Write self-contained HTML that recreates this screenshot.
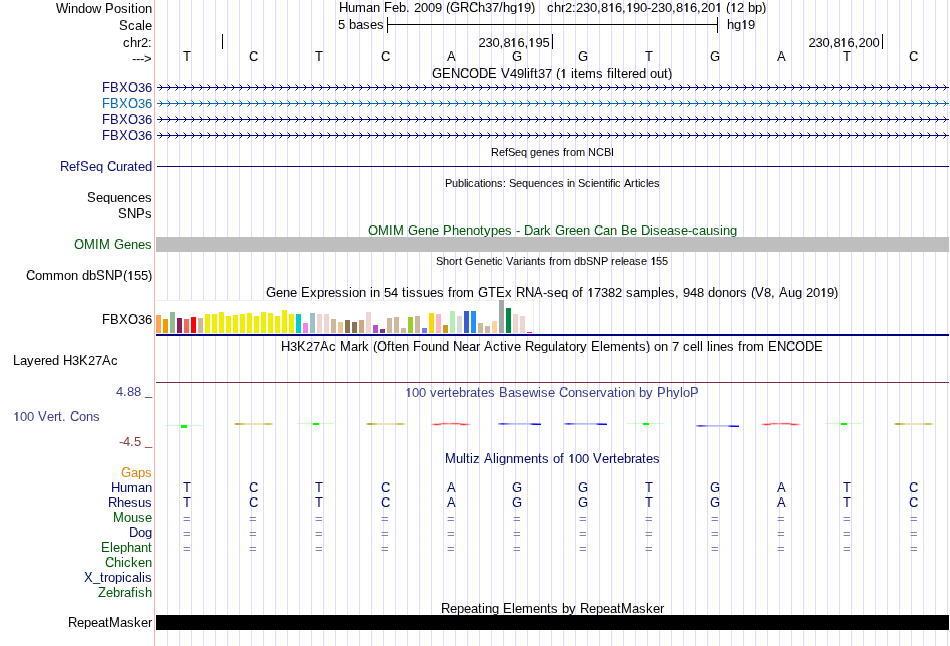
<!DOCTYPE html>
<html><head><meta charset="utf-8"><style>
html,body{margin:0;padding:0;background:#fff;width:950px;height:646px;overflow:hidden}
svg{display:block;will-change:transform}
text{font-family:"Liberation Sans", sans-serif}
</style></head><body>
<svg width="950" height="646" viewBox="0 0 950 646">
<defs><clipPath id="cb13" clipPathUnits="userSpaceOnUse"><rect x="0" y="5" width="950" height="9"/></clipPath><clipPath id="ct13" clipPathUnits="userSpaceOnUse"><rect x="0" y="-7" width="950" height="12"/><rect x="0" y="14" width="950" height="10"/></clipPath><clipPath id="cb30" clipPathUnits="userSpaceOnUse"><rect x="0" y="22" width="950" height="9"/></clipPath><clipPath id="ct30" clipPathUnits="userSpaceOnUse"><rect x="0" y="10" width="950" height="12"/><rect x="0" y="31" width="950" height="10"/></clipPath><clipPath id="cb47" clipPathUnits="userSpaceOnUse"><rect x="0" y="39" width="950" height="9"/></clipPath><clipPath id="ct47" clipPathUnits="userSpaceOnUse"><rect x="0" y="27" width="950" height="12"/><rect x="0" y="48" width="950" height="10"/></clipPath><clipPath id="cb63" clipPathUnits="userSpaceOnUse"><rect x="0" y="55" width="950" height="9"/></clipPath><clipPath id="ct63" clipPathUnits="userSpaceOnUse"><rect x="0" y="43" width="950" height="12"/><rect x="0" y="64" width="950" height="10"/></clipPath><clipPath id="cb92" clipPathUnits="userSpaceOnUse"><rect x="0" y="84" width="950" height="9"/></clipPath><clipPath id="ct92" clipPathUnits="userSpaceOnUse"><rect x="0" y="72" width="950" height="12"/><rect x="0" y="93" width="950" height="10"/></clipPath><clipPath id="cb108" clipPathUnits="userSpaceOnUse"><rect x="0" y="100" width="950" height="9"/></clipPath><clipPath id="ct108" clipPathUnits="userSpaceOnUse"><rect x="0" y="88" width="950" height="12"/><rect x="0" y="109" width="950" height="10"/></clipPath><clipPath id="cb124" clipPathUnits="userSpaceOnUse"><rect x="0" y="116" width="950" height="9"/></clipPath><clipPath id="ct124" clipPathUnits="userSpaceOnUse"><rect x="0" y="104" width="950" height="12"/><rect x="0" y="125" width="950" height="10"/></clipPath><clipPath id="cb140" clipPathUnits="userSpaceOnUse"><rect x="0" y="132" width="950" height="9"/></clipPath><clipPath id="ct140" clipPathUnits="userSpaceOnUse"><rect x="0" y="120" width="950" height="12"/><rect x="0" y="141" width="950" height="10"/></clipPath><clipPath id="cb171" clipPathUnits="userSpaceOnUse"><rect x="0" y="163" width="950" height="9"/></clipPath><clipPath id="ct171" clipPathUnits="userSpaceOnUse"><rect x="0" y="151" width="950" height="12"/><rect x="0" y="172" width="950" height="10"/></clipPath><clipPath id="cb202" clipPathUnits="userSpaceOnUse"><rect x="0" y="194" width="950" height="9"/></clipPath><clipPath id="ct202" clipPathUnits="userSpaceOnUse"><rect x="0" y="182" width="950" height="12"/><rect x="0" y="203" width="950" height="10"/></clipPath><clipPath id="cb218" clipPathUnits="userSpaceOnUse"><rect x="0" y="210" width="950" height="9"/></clipPath><clipPath id="ct218" clipPathUnits="userSpaceOnUse"><rect x="0" y="198" width="950" height="12"/><rect x="0" y="219" width="950" height="10"/></clipPath><clipPath id="cb249" clipPathUnits="userSpaceOnUse"><rect x="0" y="241" width="950" height="9"/></clipPath><clipPath id="ct249" clipPathUnits="userSpaceOnUse"><rect x="0" y="229" width="950" height="12"/><rect x="0" y="250" width="950" height="10"/></clipPath><clipPath id="cb280" clipPathUnits="userSpaceOnUse"><rect x="0" y="272" width="950" height="9"/></clipPath><clipPath id="ct280" clipPathUnits="userSpaceOnUse"><rect x="0" y="260" width="950" height="12"/><rect x="0" y="281" width="950" height="10"/></clipPath><clipPath id="cb324" clipPathUnits="userSpaceOnUse"><rect x="0" y="316" width="950" height="9"/></clipPath><clipPath id="ct324" clipPathUnits="userSpaceOnUse"><rect x="0" y="304" width="950" height="12"/><rect x="0" y="325" width="950" height="10"/></clipPath><clipPath id="cb365" clipPathUnits="userSpaceOnUse"><rect x="0" y="357" width="950" height="9"/></clipPath><clipPath id="ct365" clipPathUnits="userSpaceOnUse"><rect x="0" y="345" width="950" height="12"/><rect x="0" y="366" width="950" height="10"/></clipPath><clipPath id="cb396" clipPathUnits="userSpaceOnUse"><rect x="0" y="388" width="950" height="9"/></clipPath><clipPath id="ct396" clipPathUnits="userSpaceOnUse"><rect x="0" y="376" width="950" height="12"/><rect x="0" y="397" width="950" height="10"/></clipPath><clipPath id="cb421" clipPathUnits="userSpaceOnUse"><rect x="0" y="413" width="950" height="9"/></clipPath><clipPath id="ct421" clipPathUnits="userSpaceOnUse"><rect x="0" y="401" width="950" height="12"/><rect x="0" y="422" width="950" height="10"/></clipPath><clipPath id="cb446" clipPathUnits="userSpaceOnUse"><rect x="0" y="438" width="950" height="9"/></clipPath><clipPath id="ct446" clipPathUnits="userSpaceOnUse"><rect x="0" y="426" width="950" height="12"/><rect x="0" y="447" width="950" height="10"/></clipPath><clipPath id="cb477" clipPathUnits="userSpaceOnUse"><rect x="0" y="469" width="950" height="9"/></clipPath><clipPath id="ct477" clipPathUnits="userSpaceOnUse"><rect x="0" y="457" width="950" height="12"/><rect x="0" y="478" width="950" height="10"/></clipPath><clipPath id="cb492" clipPathUnits="userSpaceOnUse"><rect x="0" y="484" width="950" height="9"/></clipPath><clipPath id="ct492" clipPathUnits="userSpaceOnUse"><rect x="0" y="472" width="950" height="12"/><rect x="0" y="493" width="950" height="10"/></clipPath><clipPath id="cb507" clipPathUnits="userSpaceOnUse"><rect x="0" y="499" width="950" height="9"/></clipPath><clipPath id="ct507" clipPathUnits="userSpaceOnUse"><rect x="0" y="487" width="950" height="12"/><rect x="0" y="508" width="950" height="10"/></clipPath><clipPath id="cb522" clipPathUnits="userSpaceOnUse"><rect x="0" y="514" width="950" height="9"/></clipPath><clipPath id="ct522" clipPathUnits="userSpaceOnUse"><rect x="0" y="502" width="950" height="12"/><rect x="0" y="523" width="950" height="10"/></clipPath><clipPath id="cb537" clipPathUnits="userSpaceOnUse"><rect x="0" y="529" width="950" height="9"/></clipPath><clipPath id="ct537" clipPathUnits="userSpaceOnUse"><rect x="0" y="517" width="950" height="12"/><rect x="0" y="538" width="950" height="10"/></clipPath><clipPath id="cb552" clipPathUnits="userSpaceOnUse"><rect x="0" y="544" width="950" height="9"/></clipPath><clipPath id="ct552" clipPathUnits="userSpaceOnUse"><rect x="0" y="532" width="950" height="12"/><rect x="0" y="553" width="950" height="10"/></clipPath><clipPath id="cb567" clipPathUnits="userSpaceOnUse"><rect x="0" y="559" width="950" height="9"/></clipPath><clipPath id="ct567" clipPathUnits="userSpaceOnUse"><rect x="0" y="547" width="950" height="12"/><rect x="0" y="568" width="950" height="10"/></clipPath><clipPath id="cb582" clipPathUnits="userSpaceOnUse"><rect x="0" y="574" width="950" height="9"/></clipPath><clipPath id="ct582" clipPathUnits="userSpaceOnUse"><rect x="0" y="562" width="950" height="12"/><rect x="0" y="583" width="950" height="10"/></clipPath><clipPath id="cb597" clipPathUnits="userSpaceOnUse"><rect x="0" y="589" width="950" height="9"/></clipPath><clipPath id="ct597" clipPathUnits="userSpaceOnUse"><rect x="0" y="577" width="950" height="12"/><rect x="0" y="598" width="950" height="10"/></clipPath><clipPath id="cb627" clipPathUnits="userSpaceOnUse"><rect x="0" y="619" width="950" height="9"/></clipPath><clipPath id="ct627" clipPathUnits="userSpaceOnUse"><rect x="0" y="607" width="950" height="12"/><rect x="0" y="628" width="950" height="10"/></clipPath><clipPath id="cb12" clipPathUnits="userSpaceOnUse"><rect x="0" y="4" width="950" height="9"/></clipPath><clipPath id="ct12" clipPathUnits="userSpaceOnUse"><rect x="0" y="-8" width="950" height="12"/><rect x="0" y="13" width="950" height="10"/></clipPath><clipPath id="cb29" clipPathUnits="userSpaceOnUse"><rect x="0" y="21" width="950" height="9"/></clipPath><clipPath id="ct29" clipPathUnits="userSpaceOnUse"><rect x="0" y="9" width="950" height="12"/><rect x="0" y="30" width="950" height="10"/></clipPath><clipPath id="cb61" clipPathUnits="userSpaceOnUse"><rect x="0" y="53" width="950" height="9"/></clipPath><clipPath id="ct61" clipPathUnits="userSpaceOnUse"><rect x="0" y="41" width="950" height="12"/><rect x="0" y="62" width="950" height="10"/></clipPath><clipPath id="cb78" clipPathUnits="userSpaceOnUse"><rect x="0" y="70" width="950" height="9"/></clipPath><clipPath id="ct78" clipPathUnits="userSpaceOnUse"><rect x="0" y="58" width="950" height="12"/><rect x="0" y="79" width="950" height="10"/></clipPath><clipPath id="cb235" clipPathUnits="userSpaceOnUse"><rect x="0" y="227" width="950" height="9"/></clipPath><clipPath id="ct235" clipPathUnits="userSpaceOnUse"><rect x="0" y="215" width="950" height="12"/><rect x="0" y="236" width="950" height="10"/></clipPath><clipPath id="cb297" clipPathUnits="userSpaceOnUse"><rect x="0" y="289" width="950" height="9"/></clipPath><clipPath id="ct297" clipPathUnits="userSpaceOnUse"><rect x="0" y="277" width="950" height="12"/><rect x="0" y="298" width="950" height="10"/></clipPath><clipPath id="cb351" clipPathUnits="userSpaceOnUse"><rect x="0" y="343" width="950" height="9"/></clipPath><clipPath id="ct351" clipPathUnits="userSpaceOnUse"><rect x="0" y="331" width="950" height="12"/><rect x="0" y="352" width="950" height="10"/></clipPath><clipPath id="cb397" clipPathUnits="userSpaceOnUse"><rect x="0" y="389" width="950" height="9"/></clipPath><clipPath id="ct397" clipPathUnits="userSpaceOnUse"><rect x="0" y="377" width="950" height="12"/><rect x="0" y="398" width="950" height="10"/></clipPath><linearGradient id="gC" x1="0" x2="1" y1="0" y2="0"><stop offset="0" stop-color="#b4ac32" stop-opacity="0.3"/><stop offset="0.08" stop-color="#aca52a" stop-opacity="1"/><stop offset="0.18" stop-color="#c8c364" stop-opacity="1"/><stop offset="0.3" stop-color="#e8e6be" stop-opacity="1"/><stop offset="0.7" stop-color="#e8e6be" stop-opacity="1"/><stop offset="0.8" stop-color="#cdc86e" stop-opacity="1"/><stop offset="0.9" stop-color="#c3be5a" stop-opacity="0.9"/><stop offset="1" stop-color="#c8c364" stop-opacity="0"/></linearGradient><linearGradient id="gG" x1="0" x2="1" y1="0" y2="0"><stop offset="0" stop-color="#3a3aff" stop-opacity="0.35"/><stop offset="0.1" stop-color="#2a2aff" stop-opacity="0.95"/><stop offset="0.2" stop-color="#7070ff" stop-opacity="0.9"/><stop offset="0.3" stop-color="#b8b8ff" stop-opacity="1"/><stop offset="0.72" stop-color="#bcbcff" stop-opacity="1"/><stop offset="0.8" stop-color="#9a9aff" stop-opacity="1"/><stop offset="0.86" stop-color="#8080ff" stop-opacity="0.6"/><stop offset="1" stop-color="#8080ff" stop-opacity="0"/></linearGradient><linearGradient id="gGt" x1="0" x2="1" y1="0" y2="0"><stop offset="0" stop-color="#0000ff" stop-opacity="0.1"/><stop offset="0.3" stop-color="#0000ff" stop-opacity="0.9"/><stop offset="0.95" stop-color="#0000ff" stop-opacity="1"/><stop offset="1" stop-color="#0000ff" stop-opacity="0.5"/></linearGradient><linearGradient id="gAL" x1="0" x2="1" y1="0" y2="0"><stop offset="0" stop-color="#ff2020" stop-opacity="0.1"/><stop offset="0.5" stop-color="#ff2020" stop-opacity="1"/><stop offset="1" stop-color="#ff4040" stop-opacity="0.7"/></linearGradient><linearGradient id="gAR" x1="0" x2="1" y1="0" y2="0"><stop offset="0" stop-color="#ff4040" stop-opacity="0.7"/><stop offset="0.35" stop-color="#ff2020" stop-opacity="1"/><stop offset="1" stop-color="#ff2020" stop-opacity="0.1"/></linearGradient><linearGradient id="gAM" x1="0" x2="1" y1="0" y2="0"><stop offset="0" stop-color="#ff6060" stop-opacity="0.35"/><stop offset="0.2" stop-color="#ff3c3c" stop-opacity="0.85"/><stop offset="0.45" stop-color="#ff7a7a" stop-opacity="0.75"/><stop offset="0.6" stop-color="#ff4444" stop-opacity="0.85"/><stop offset="0.85" stop-color="#ff4040" stop-opacity="0.85"/><stop offset="1" stop-color="#ff6060" stop-opacity="0.35"/></linearGradient><clipPath id="cb463" clipPathUnits="userSpaceOnUse"><rect x="0" y="455" width="950" height="9"/></clipPath><clipPath id="ct463" clipPathUnits="userSpaceOnUse"><rect x="0" y="443" width="950" height="12"/><rect x="0" y="464" width="950" height="10"/></clipPath><clipPath id="cb523" clipPathUnits="userSpaceOnUse"><rect x="0" y="515" width="950" height="9"/></clipPath><clipPath id="ct523" clipPathUnits="userSpaceOnUse"><rect x="0" y="503" width="950" height="12"/><rect x="0" y="524" width="950" height="10"/></clipPath><clipPath id="cb538" clipPathUnits="userSpaceOnUse"><rect x="0" y="530" width="950" height="9"/></clipPath><clipPath id="ct538" clipPathUnits="userSpaceOnUse"><rect x="0" y="518" width="950" height="12"/><rect x="0" y="539" width="950" height="10"/></clipPath><clipPath id="cb553" clipPathUnits="userSpaceOnUse"><rect x="0" y="545" width="950" height="9"/></clipPath><clipPath id="ct553" clipPathUnits="userSpaceOnUse"><rect x="0" y="533" width="950" height="12"/><rect x="0" y="554" width="950" height="10"/></clipPath><clipPath id="cb613" clipPathUnits="userSpaceOnUse"><rect x="0" y="605" width="950" height="9"/></clipPath><clipPath id="ct613" clipPathUnits="userSpaceOnUse"><rect x="0" y="593" width="950" height="12"/><rect x="0" y="614" width="950" height="10"/></clipPath></defs>
<rect width="950" height="646" fill="#fff"/>
<rect x="167" y="0" width="1" height="646" fill="#ddddff"/>
<rect x="179" y="0" width="1" height="646" fill="#ddddff"/>
<rect x="191" y="0" width="1" height="646" fill="#ddddff"/>
<rect x="203" y="0" width="1" height="646" fill="#ddddff"/>
<rect x="215" y="0" width="1" height="646" fill="#ddddff"/>
<rect x="227" y="0" width="1" height="646" fill="#ddddff"/>
<rect x="239" y="0" width="1" height="646" fill="#ddddff"/>
<rect x="251" y="0" width="1" height="646" fill="#ddddff"/>
<rect x="263" y="0" width="1" height="646" fill="#ddddff"/>
<rect x="275" y="0" width="1" height="646" fill="#ddddff"/>
<rect x="287" y="0" width="1" height="646" fill="#ddddff"/>
<rect x="299" y="0" width="1" height="646" fill="#ddddff"/>
<rect x="311" y="0" width="1" height="646" fill="#ddddff"/>
<rect x="323" y="0" width="1" height="646" fill="#ddddff"/>
<rect x="335" y="0" width="1" height="646" fill="#ddddff"/>
<rect x="347" y="0" width="1" height="646" fill="#ddddff"/>
<rect x="359" y="0" width="1" height="646" fill="#ddddff"/>
<rect x="371" y="0" width="1" height="646" fill="#ddddff"/>
<rect x="383" y="0" width="1" height="646" fill="#ddddff"/>
<rect x="395" y="0" width="1" height="646" fill="#ddddff"/>
<rect x="407" y="0" width="1" height="646" fill="#ddddff"/>
<rect x="419" y="0" width="1" height="646" fill="#ddddff"/>
<rect x="431" y="0" width="1" height="646" fill="#ddddff"/>
<rect x="443" y="0" width="1" height="646" fill="#ddddff"/>
<rect x="455" y="0" width="1" height="646" fill="#ddddff"/>
<rect x="467" y="0" width="1" height="646" fill="#ddddff"/>
<rect x="479" y="0" width="1" height="646" fill="#ddddff"/>
<rect x="491" y="0" width="1" height="646" fill="#ddddff"/>
<rect x="503" y="0" width="1" height="646" fill="#ddddff"/>
<rect x="515" y="0" width="1" height="646" fill="#ddddff"/>
<rect x="527" y="0" width="1" height="646" fill="#ddddff"/>
<rect x="539" y="0" width="1" height="646" fill="#ddddff"/>
<rect x="551" y="0" width="1" height="646" fill="#ddddff"/>
<rect x="563" y="0" width="1" height="646" fill="#ddddff"/>
<rect x="575" y="0" width="1" height="646" fill="#ddddff"/>
<rect x="587" y="0" width="1" height="646" fill="#ddddff"/>
<rect x="599" y="0" width="1" height="646" fill="#ddddff"/>
<rect x="611" y="0" width="1" height="646" fill="#ddddff"/>
<rect x="623" y="0" width="1" height="646" fill="#ddddff"/>
<rect x="635" y="0" width="1" height="646" fill="#ddddff"/>
<rect x="647" y="0" width="1" height="646" fill="#ddddff"/>
<rect x="659" y="0" width="1" height="646" fill="#ddddff"/>
<rect x="671" y="0" width="1" height="646" fill="#ddddff"/>
<rect x="683" y="0" width="1" height="646" fill="#ddddff"/>
<rect x="695" y="0" width="1" height="646" fill="#ddddff"/>
<rect x="707" y="0" width="1" height="646" fill="#ddddff"/>
<rect x="719" y="0" width="1" height="646" fill="#ddddff"/>
<rect x="731" y="0" width="1" height="646" fill="#ddddff"/>
<rect x="743" y="0" width="1" height="646" fill="#ddddff"/>
<rect x="755" y="0" width="1" height="646" fill="#ddddff"/>
<rect x="767" y="0" width="1" height="646" fill="#ddddff"/>
<rect x="779" y="0" width="1" height="646" fill="#ddddff"/>
<rect x="791" y="0" width="1" height="646" fill="#ddddff"/>
<rect x="803" y="0" width="1" height="646" fill="#ddddff"/>
<rect x="815" y="0" width="1" height="646" fill="#ddddff"/>
<rect x="827" y="0" width="1" height="646" fill="#ddddff"/>
<rect x="839" y="0" width="1" height="646" fill="#ddddff"/>
<rect x="851" y="0" width="1" height="646" fill="#ddddff"/>
<rect x="863" y="0" width="1" height="646" fill="#ddddff"/>
<rect x="875" y="0" width="1" height="646" fill="#ddddff"/>
<rect x="887" y="0" width="1" height="646" fill="#ddddff"/>
<rect x="899" y="0" width="1" height="646" fill="#ddddff"/>
<rect x="911" y="0" width="1" height="646" fill="#ddddff"/>
<rect x="923" y="0" width="1" height="646" fill="#ddddff"/>
<rect x="935" y="0" width="1" height="646" fill="#ddddff"/>
<rect x="947" y="0" width="1" height="646" fill="#ddddff"/>
<rect x="154" y="0" width="1" height="646" fill="#ffb0b0"/>
<text x="56 68 71 78 85 92 105 114 121 128 131 135 138 145" y="13" font-size="13.0" fill="#000" clip-path="url(#cb13)">WindowPosition</text>
<g clip-path="url(#ct13)">
<text x="56 68 71 78 85 92 105 114 121 128 131 135 138 145" y="12" font-size="13.0" fill="#000">WindowPosition</text>
</g>
<text x="119 128 135 142 145" y="30" font-size="13.0" fill="#000" clip-path="url(#cb30)">Scale</text>
<g clip-path="url(#ct30)">
<text x="119 128 135 142 145" y="29" font-size="13.0" fill="#000">Scale</text>
</g>
<text x="141" y="47" font-size="13.0" fill="#000">2</text>
<text x="123 130 137 148" y="47" font-size="13.0" fill="#000" clip-path="url(#cb47)">chr:</text>
<g clip-path="url(#ct47)">
<text x="123 130 137 148" y="46" font-size="13.0" fill="#000">chr:</text>
</g>
<text x="132 136 140 144" y="63" font-size="13.0" fill="#000" clip-path="url(#cb63)">---&gt;</text>
<g clip-path="url(#ct63)">
<text x="132 136 140 144" y="62" font-size="13.0" fill="#000">---&gt;</text>
</g>
<text x="138 145" y="92" font-size="13.0" fill="#0c0c78">36</text>
<text x="102 110 119 128" y="92" font-size="13.0" fill="#0c0c78" clip-path="url(#cb92)">FBXO</text>
<g clip-path="url(#ct92)">
<text x="102 110 119 128" y="91" font-size="13.0" fill="#0c0c78">FBXO</text>
</g>
<text x="138 145" y="108" font-size="13.0" fill="#0c66aa">36</text>
<text x="102 110 119 128" y="108" font-size="13.0" fill="#0c66aa" clip-path="url(#cb108)">FBXO</text>
<g clip-path="url(#ct108)">
<text x="102 110 119 128" y="107" font-size="13.0" fill="#0c66aa">FBXO</text>
</g>
<text x="138 145" y="124" font-size="13.0" fill="#0c0c78">36</text>
<text x="102 110 119 128" y="124" font-size="13.0" fill="#0c0c78" clip-path="url(#cb124)">FBXO</text>
<g clip-path="url(#ct124)">
<text x="102 110 119 128" y="123" font-size="13.0" fill="#0c0c78">FBXO</text>
</g>
<text x="138 145" y="140" font-size="13.0" fill="#0c0c78">36</text>
<text x="102 110 119 128" y="140" font-size="13.0" fill="#0c0c78" clip-path="url(#cb140)">FBXO</text>
<g clip-path="url(#ct140)">
<text x="102 110 119 128" y="139" font-size="13.0" fill="#0c0c78">FBXO</text>
</g>
<text x="60 69 76 80 89 96 107 116 123 127 134 138 145" y="171" font-size="13.0" fill="#0c0c78" clip-path="url(#cb171)">RefSeqCurated</text>
<g clip-path="url(#ct171)">
<text x="60 69 76 80 89 96 107 116 123 127 134 138 145" y="170" font-size="13.0" fill="#0c0c78">RefSeqCurated</text>
</g>
<text x="87 96 103 110 117 124 131 138 145" y="202" font-size="13.0" fill="#000" clip-path="url(#cb202)">Sequences</text>
<g clip-path="url(#ct202)">
<text x="87 96 103 110 117 124 131 138 145" y="201" font-size="13.0" fill="#000">Sequences</text>
</g>
<text x="118 127 136 145" y="218" font-size="13.0" fill="#000" clip-path="url(#cb218)">SNPs</text>
<g clip-path="url(#ct218)">
<text x="118 127 136 145" y="217" font-size="13.0" fill="#000">SNPs</text>
</g>
<text x="74 84 95 99 114 124 131 138 145" y="249" font-size="13.0" fill="#005a0a" clip-path="url(#cb249)">OMIMGenes</text>
<g clip-path="url(#ct249)">
<text x="74 84 95 99 114 124 131 138 145" y="248" font-size="13.0" fill="#005a0a">OMIMGenes</text>
</g>
<path d="M130,271h1v9h-1z" fill="#000" fill-opacity="0.85"/><path d="M131,271h1v9h-1z" fill="#000" fill-opacity="0.6"/><path d="M129,272h1v1h-1z" fill="#000" fill-opacity="0.85"/><path d="M129,273h1v1h-1z M128,273h1v1h-1z" fill="#000" fill-opacity="0.45"/>
<text x="134 141" y="280" font-size="13.0" fill="#000">55</text>
<text x="26 35 42 53 64 71 82 89 96 105 114 123 148" y="280" font-size="13.0" fill="#000" clip-path="url(#cb280)">CommondbSNP()</text>
<g clip-path="url(#ct280)">
<text x="26 35 42 53 64 71 82 89 96 105 114 123 148" y="279" font-size="13.0" fill="#000">CommondbSNP()</text>
</g>
<text x="138 145" y="324" font-size="13.0" fill="#000">36</text>
<text x="102 110 119 128" y="324" font-size="13.0" fill="#000" clip-path="url(#cb324)">FBXO</text>
<g clip-path="url(#ct324)">
<text x="102 110 119 128" y="323" font-size="13.0" fill="#000">FBXO</text>
</g>
<text x="72 88 95" y="365" font-size="13.0" fill="#000">327</text>
<text x="13 20 27 34 41 45 52 63 79 102 111" y="365" font-size="13.0" fill="#000" clip-path="url(#cb365)">LayeredHKAc</text>
<g clip-path="url(#ct365)">
<text x="13 20 27 34 41 45 52 63 79 102 111" y="364" font-size="13.0" fill="#000">LayeredHKAc</text>
</g>
<text x="116 127 134" y="396" font-size="13.0" fill="#3c3c8c">488</text>
<text x="123 145" y="396" font-size="13.0" fill="#3c3c8c" clip-path="url(#cb396)">._</text>
<g clip-path="url(#ct396)">
<text x="123 145" y="395" font-size="13.0" fill="#3c3c8c">._</text>
</g>
<path d="M16,412h1v9h-1z" fill="#3c3c8c" fill-opacity="0.85"/><path d="M17,412h1v9h-1z" fill="#3c3c8c" fill-opacity="0.6"/><path d="M15,413h1v1h-1z" fill="#3c3c8c" fill-opacity="0.85"/><path d="M15,414h1v1h-1z M14,414h1v1h-1z" fill="#3c3c8c" fill-opacity="0.45"/>
<text x="20 27" y="421" font-size="13.0" fill="#3c3c8c">00</text>
<text x="38 47 54 58 62 70 79 86 93" y="421" font-size="13.0" fill="#3c3c8c" clip-path="url(#cb421)">Vert.Cons</text>
<g clip-path="url(#ct421)">
<text x="38 47 54 58 62 70 79 86 93" y="420" font-size="13.0" fill="#3c3c8c">Vert.Cons</text>
</g>
<text x="123 134" y="446" font-size="13.0" fill="#8c3c3c">45</text>
<text x="119 130 145" y="446" font-size="13.0" fill="#8c3c3c" clip-path="url(#cb446)">-._</text>
<g clip-path="url(#ct446)">
<text x="119 130 145" y="445" font-size="13.0" fill="#8c3c3c">-._</text>
</g>
<text x="121 131 138 145" y="477" font-size="13.0" fill="#e6820a" clip-path="url(#cb477)">Gaps</text>
<g clip-path="url(#ct477)">
<text x="121 131 138 145" y="476" font-size="13.0" fill="#e6820a">Gaps</text>
</g>
<text x="111 120 127 138 145" y="492" font-size="13.0" fill="#000a64" clip-path="url(#cb492)">Human</text>
<g clip-path="url(#ct492)">
<text x="111 120 127 138 145" y="491" font-size="13.0" fill="#000a64">Human</text>
</g>
<text x="108 117 124 131 138 145" y="507" font-size="13.0" fill="#000a64" clip-path="url(#cb507)">Rhesus</text>
<g clip-path="url(#ct507)">
<text x="108 117 124 131 138 145" y="506" font-size="13.0" fill="#000a64">Rhesus</text>
</g>
<text x="113 124 131 138 145" y="522" font-size="13.0" fill="#005a0a" clip-path="url(#cb522)">Mouse</text>
<g clip-path="url(#ct522)">
<text x="113 124 131 138 145" y="521" font-size="13.0" fill="#005a0a">Mouse</text>
</g>
<text x="129 138 145" y="537" font-size="13.0" fill="#000a64" clip-path="url(#cb537)">Dog</text>
<g clip-path="url(#ct537)">
<text x="129 138 145" y="536" font-size="13.0" fill="#000a64">Dog</text>
</g>
<text x="101 110 113 120 127 134 141 148" y="552" font-size="13.0" fill="#005a0a" clip-path="url(#cb552)">Elephant</text>
<g clip-path="url(#ct552)">
<text x="101 110 113 120 127 134 141 148" y="551" font-size="13.0" fill="#005a0a">Elephant</text>
</g>
<text x="105 114 121 124 131 138 145" y="567" font-size="13.0" fill="#005a0a" clip-path="url(#cb567)">Chicken</text>
<g clip-path="url(#ct567)">
<text x="105 114 121 124 131 138 145" y="566" font-size="13.0" fill="#005a0a">Chicken</text>
</g>
<text x="84 93 100 104 108 115 122 125 132 139 142 145" y="582" font-size="13.0" fill="#000a64" clip-path="url(#cb582)">X_tropicalis</text>
<g clip-path="url(#ct582)">
<text x="84 93 100 104 108 115 122 125 132 139 142 145" y="581" font-size="13.0" fill="#000a64">X_tropicalis</text>
</g>
<text x="98 106 113 120 124 131 135 138 145" y="597" font-size="13.0" fill="#005a0a" clip-path="url(#cb597)">Zebrafish</text>
<g clip-path="url(#ct597)">
<text x="98 106 113 120 124 131 135 138 145" y="596" font-size="13.0" fill="#005a0a">Zebrafish</text>
</g>
<text x="68 77 84 91 98 105 109 120 127 134 141 148" y="627" font-size="13.0" fill="#000" clip-path="url(#cb627)">RepeatMasker</text>
<g clip-path="url(#ct627)">
<text x="68 77 84 91 98 105 109 120 127 134 141 148" y="626" font-size="13.0" fill="#000">RepeatMasker</text>
</g>
<path d="M520,3h1v9h-1z" fill="#000" fill-opacity="0.85"/><path d="M521,3h1v9h-1z" fill="#000" fill-opacity="0.6"/><path d="M519,4h1v1h-1z" fill="#000" fill-opacity="0.85"/><path d="M519,5h1v1h-1z M518,5h1v1h-1z" fill="#000" fill-opacity="0.45"/>
<text x="414 421 428 435 485 492 524" y="12" font-size="13.0" fill="#000">2009379</text>
<text x="339 348 355 366 373 384 392 399 406 446 450 460 469 478 499 503 510 531" y="12" font-size="13.0" fill="#000" clip-path="url(#cb12)">HumanFeb.(GRCh/hg)</text>
<g clip-path="url(#ct12)">
<text x="339 348 355 366 373 384 392 399 406 446 450 460 469 478 499 503 510 531" y="11" font-size="13.0" fill="#000">HumanFeb.(GRCh/hg)</text>
</g>
<path d="M611,3h1v9h-1z" fill="#000" fill-opacity="0.85"/><path d="M612,3h1v9h-1z" fill="#000" fill-opacity="0.6"/><path d="M610,4h1v1h-1z" fill="#000" fill-opacity="0.85"/><path d="M610,5h1v1h-1z M609,5h1v1h-1z" fill="#000" fill-opacity="0.45"/>
<path d="M629,3h1v9h-1z" fill="#000" fill-opacity="0.85"/><path d="M630,3h1v9h-1z" fill="#000" fill-opacity="0.6"/><path d="M628,4h1v1h-1z" fill="#000" fill-opacity="0.85"/><path d="M628,5h1v1h-1z M627,5h1v1h-1z" fill="#000" fill-opacity="0.45"/>
<path d="M686,3h1v9h-1z" fill="#000" fill-opacity="0.85"/><path d="M687,3h1v9h-1z" fill="#000" fill-opacity="0.6"/><path d="M685,4h1v1h-1z" fill="#000" fill-opacity="0.85"/><path d="M685,5h1v1h-1z M684,5h1v1h-1z" fill="#000" fill-opacity="0.45"/>
<path d="M718,3h1v9h-1z" fill="#000" fill-opacity="0.85"/><path d="M719,3h1v9h-1z" fill="#000" fill-opacity="0.6"/><path d="M717,4h1v1h-1z" fill="#000" fill-opacity="0.85"/><path d="M717,5h1v1h-1z M716,5h1v1h-1z" fill="#000" fill-opacity="0.45"/>
<path d="M733,3h1v9h-1z" fill="#000" fill-opacity="0.85"/><path d="M734,3h1v9h-1z" fill="#000" fill-opacity="0.6"/><path d="M732,4h1v1h-1z" fill="#000" fill-opacity="0.85"/><path d="M732,5h1v1h-1z M731,5h1v1h-1z" fill="#000" fill-opacity="0.45"/>
<text x="565 576 583 590 597 601 615 622 633 640 651 658 665 672 676 690 697 701 708 737" y="12" font-size="13.0" fill="#000">2230,86,90230,86,202</text>
<text x="547 554 561 572 647 726 748 755 762" y="12" font-size="13.0" fill="#000" clip-path="url(#cb12)">chr:-(bp)</text>
<g clip-path="url(#ct12)">
<text x="547 554 561 572 647 726 748 755 762" y="11" font-size="13.0" fill="#000">chr:-(bp)</text>
</g>
<text x="338" y="29" font-size="13.0" fill="#000">5</text>
<text x="349 356 363 370 377" y="29" font-size="13.0" fill="#000" clip-path="url(#cb29)">bases</text>
<g clip-path="url(#ct29)">
<text x="349 356 363 370 377" y="28" font-size="13.0" fill="#000">bases</text>
</g>
<rect x="387" y="17" width="1" height="16" fill="#000"/>
<rect x="717" y="17" width="1" height="16" fill="#000"/>
<rect x="387" y="24" width="331" height="1" fill="#000"/>
<path d="M744,20h1v9h-1z" fill="#000" fill-opacity="0.85"/><path d="M745,20h1v9h-1z" fill="#000" fill-opacity="0.6"/><path d="M743,21h1v1h-1z" fill="#000" fill-opacity="0.85"/><path d="M743,22h1v1h-1z M742,22h1v1h-1z" fill="#000" fill-opacity="0.45"/>
<text x="748" y="29" font-size="13.0" fill="#000">9</text>
<text x="727 734" y="29" font-size="13.0" fill="#000" clip-path="url(#cb29)">hg</text>
<g clip-path="url(#ct29)">
<text x="727 734" y="28" font-size="13.0" fill="#000">hg</text>
</g>
<rect x="222" y="34" width="1" height="15" fill="#000"/>
<rect x="552" y="34" width="1" height="15" fill="#000"/>
<rect x="882" y="34" width="1" height="15" fill="#000"/>
<path d="M513,38h1v9h-1z" fill="#000" fill-opacity="0.85"/><path d="M514,38h1v9h-1z" fill="#000" fill-opacity="0.6"/><path d="M512,39h1v1h-1z" fill="#000" fill-opacity="0.85"/><path d="M512,40h1v1h-1z M511,40h1v1h-1z" fill="#000" fill-opacity="0.45"/>
<path d="M531,38h1v9h-1z" fill="#000" fill-opacity="0.85"/><path d="M532,38h1v9h-1z" fill="#000" fill-opacity="0.6"/><path d="M530,39h1v1h-1z" fill="#000" fill-opacity="0.85"/><path d="M530,40h1v1h-1z M529,40h1v1h-1z" fill="#000" fill-opacity="0.45"/>
<text x="478.5 485.5 492.5 499.5 503.5 517.5 524.5 535.5 542.5" y="47" font-size="13.0" fill="#000">230,86,95</text>
<path d="M843,38h1v9h-1z" fill="#000" fill-opacity="0.85"/><path d="M844,38h1v9h-1z" fill="#000" fill-opacity="0.6"/><path d="M842,39h1v1h-1z" fill="#000" fill-opacity="0.85"/><path d="M842,40h1v1h-1z M841,40h1v1h-1z" fill="#000" fill-opacity="0.45"/>
<text x="808.5 815.5 822.5 829.5 833.5 847.5 854.5 858.5 865.5 872.5" y="47" font-size="13.0" fill="#000">230,86,200</text>
<text x="183" y="61" font-size="13.0" fill="#000" clip-path="url(#cb61)">T</text>
<g clip-path="url(#ct61)">
<text x="183" y="60" font-size="13.0" fill="#000">T</text>
</g>
<text x="249" y="61" font-size="13.0" fill="#000" clip-path="url(#cb61)">C</text>
<g clip-path="url(#ct61)">
<text x="249" y="60" font-size="13.0" fill="#000">C</text>
</g>
<text x="315" y="61" font-size="13.0" fill="#000" clip-path="url(#cb61)">T</text>
<g clip-path="url(#ct61)">
<text x="315" y="60" font-size="13.0" fill="#000">T</text>
</g>
<text x="381" y="61" font-size="13.0" fill="#000" clip-path="url(#cb61)">C</text>
<g clip-path="url(#ct61)">
<text x="381" y="60" font-size="13.0" fill="#000">C</text>
</g>
<text x="447" y="61" font-size="13.0" fill="#000" clip-path="url(#cb61)">A</text>
<g clip-path="url(#ct61)">
<text x="447" y="60" font-size="13.0" fill="#000">A</text>
</g>
<text x="512" y="61" font-size="13.0" fill="#000" clip-path="url(#cb61)">G</text>
<g clip-path="url(#ct61)">
<text x="512" y="60" font-size="13.0" fill="#000">G</text>
</g>
<text x="578" y="61" font-size="13.0" fill="#000" clip-path="url(#cb61)">G</text>
<g clip-path="url(#ct61)">
<text x="578" y="60" font-size="13.0" fill="#000">G</text>
</g>
<text x="645" y="61" font-size="13.0" fill="#000" clip-path="url(#cb61)">T</text>
<g clip-path="url(#ct61)">
<text x="645" y="60" font-size="13.0" fill="#000">T</text>
</g>
<text x="710" y="61" font-size="13.0" fill="#000" clip-path="url(#cb61)">G</text>
<g clip-path="url(#ct61)">
<text x="710" y="60" font-size="13.0" fill="#000">G</text>
</g>
<text x="777" y="61" font-size="13.0" fill="#000" clip-path="url(#cb61)">A</text>
<g clip-path="url(#ct61)">
<text x="777" y="60" font-size="13.0" fill="#000">A</text>
</g>
<text x="843" y="61" font-size="13.0" fill="#000" clip-path="url(#cb61)">T</text>
<g clip-path="url(#ct61)">
<text x="843" y="60" font-size="13.0" fill="#000">T</text>
</g>
<text x="909" y="61" font-size="13.0" fill="#000" clip-path="url(#cb61)">C</text>
<g clip-path="url(#ct61)">
<text x="909" y="60" font-size="13.0" fill="#000">C</text>
</g>
<path d="M563,69h1v9h-1z" fill="#000" fill-opacity="0.85"/><path d="M564,69h1v9h-1z" fill="#000" fill-opacity="0.6"/><path d="M562,70h1v1h-1z" fill="#000" fill-opacity="0.85"/><path d="M562,71h1v1h-1z M561,71h1v1h-1z" fill="#000" fill-opacity="0.45"/>
<text x="510 517 538 545" y="78" font-size="13.0" fill="#000">4937</text>
<text x="432 442 451 460 469 479 488 501 524 527 530 534 556 571 574 578 585 596 607 611 614 617 621 628 632 639 650 657 664 668" y="78" font-size="13.0" fill="#000" clip-path="url(#cb78)">GENCODEVlift(itemsfilteredout)</text>
<g clip-path="url(#ct78)">
<text x="432 442 451 460 469 479 488 501 524 527 530 534 556 571 574 578 585 596 607 611 614 617 621 628 632 639 650 657 664 668" y="77" font-size="13.0" fill="#000">GENCODEVlift(itemsfilteredout)</text>
</g>
<rect x="157" y="87" width="792" height="1" fill="#0c0c78"/>
<path d="M161,86h1v3h-1z M160,85h1v1h-1z M160,89h1v1h-1z M169,86h1v3h-1z M168,85h1v1h-1z M168,89h1v1h-1z M177,86h1v3h-1z M176,85h1v1h-1z M176,89h1v1h-1z M185,86h1v3h-1z M184,85h1v1h-1z M184,89h1v1h-1z M193,86h1v3h-1z M192,85h1v1h-1z M192,89h1v1h-1z M201,86h1v3h-1z M200,85h1v1h-1z M200,89h1v1h-1z M209,86h1v3h-1z M208,85h1v1h-1z M208,89h1v1h-1z M217,86h1v3h-1z M216,85h1v1h-1z M216,89h1v1h-1z M225,86h1v3h-1z M224,85h1v1h-1z M224,89h1v1h-1z M233,86h1v3h-1z M232,85h1v1h-1z M232,89h1v1h-1z M241,86h1v3h-1z M240,85h1v1h-1z M240,89h1v1h-1z M249,86h1v3h-1z M248,85h1v1h-1z M248,89h1v1h-1z M257,86h1v3h-1z M256,85h1v1h-1z M256,89h1v1h-1z M265,86h1v3h-1z M264,85h1v1h-1z M264,89h1v1h-1z M273,86h1v3h-1z M272,85h1v1h-1z M272,89h1v1h-1z M281,86h1v3h-1z M280,85h1v1h-1z M280,89h1v1h-1z M289,86h1v3h-1z M288,85h1v1h-1z M288,89h1v1h-1z M297,86h1v3h-1z M296,85h1v1h-1z M296,89h1v1h-1z M305,86h1v3h-1z M304,85h1v1h-1z M304,89h1v1h-1z M313,86h1v3h-1z M312,85h1v1h-1z M312,89h1v1h-1z M321,86h1v3h-1z M320,85h1v1h-1z M320,89h1v1h-1z M329,86h1v3h-1z M328,85h1v1h-1z M328,89h1v1h-1z M337,86h1v3h-1z M336,85h1v1h-1z M336,89h1v1h-1z M345,86h1v3h-1z M344,85h1v1h-1z M344,89h1v1h-1z M353,86h1v3h-1z M352,85h1v1h-1z M352,89h1v1h-1z M361,86h1v3h-1z M360,85h1v1h-1z M360,89h1v1h-1z M369,86h1v3h-1z M368,85h1v1h-1z M368,89h1v1h-1z M377,86h1v3h-1z M376,85h1v1h-1z M376,89h1v1h-1z M385,86h1v3h-1z M384,85h1v1h-1z M384,89h1v1h-1z M393,86h1v3h-1z M392,85h1v1h-1z M392,89h1v1h-1z M401,86h1v3h-1z M400,85h1v1h-1z M400,89h1v1h-1z M409,86h1v3h-1z M408,85h1v1h-1z M408,89h1v1h-1z M417,86h1v3h-1z M416,85h1v1h-1z M416,89h1v1h-1z M425,86h1v3h-1z M424,85h1v1h-1z M424,89h1v1h-1z M433,86h1v3h-1z M432,85h1v1h-1z M432,89h1v1h-1z M441,86h1v3h-1z M440,85h1v1h-1z M440,89h1v1h-1z M449,86h1v3h-1z M448,85h1v1h-1z M448,89h1v1h-1z M457,86h1v3h-1z M456,85h1v1h-1z M456,89h1v1h-1z M465,86h1v3h-1z M464,85h1v1h-1z M464,89h1v1h-1z M473,86h1v3h-1z M472,85h1v1h-1z M472,89h1v1h-1z M481,86h1v3h-1z M480,85h1v1h-1z M480,89h1v1h-1z M489,86h1v3h-1z M488,85h1v1h-1z M488,89h1v1h-1z M497,86h1v3h-1z M496,85h1v1h-1z M496,89h1v1h-1z M505,86h1v3h-1z M504,85h1v1h-1z M504,89h1v1h-1z M513,86h1v3h-1z M512,85h1v1h-1z M512,89h1v1h-1z M521,86h1v3h-1z M520,85h1v1h-1z M520,89h1v1h-1z M529,86h1v3h-1z M528,85h1v1h-1z M528,89h1v1h-1z M537,86h1v3h-1z M536,85h1v1h-1z M536,89h1v1h-1z M545,86h1v3h-1z M544,85h1v1h-1z M544,89h1v1h-1z M553,86h1v3h-1z M552,85h1v1h-1z M552,89h1v1h-1z M561,86h1v3h-1z M560,85h1v1h-1z M560,89h1v1h-1z M569,86h1v3h-1z M568,85h1v1h-1z M568,89h1v1h-1z M577,86h1v3h-1z M576,85h1v1h-1z M576,89h1v1h-1z M585,86h1v3h-1z M584,85h1v1h-1z M584,89h1v1h-1z M593,86h1v3h-1z M592,85h1v1h-1z M592,89h1v1h-1z M601,86h1v3h-1z M600,85h1v1h-1z M600,89h1v1h-1z M609,86h1v3h-1z M608,85h1v1h-1z M608,89h1v1h-1z M617,86h1v3h-1z M616,85h1v1h-1z M616,89h1v1h-1z M625,86h1v3h-1z M624,85h1v1h-1z M624,89h1v1h-1z M633,86h1v3h-1z M632,85h1v1h-1z M632,89h1v1h-1z M641,86h1v3h-1z M640,85h1v1h-1z M640,89h1v1h-1z M649,86h1v3h-1z M648,85h1v1h-1z M648,89h1v1h-1z M657,86h1v3h-1z M656,85h1v1h-1z M656,89h1v1h-1z M665,86h1v3h-1z M664,85h1v1h-1z M664,89h1v1h-1z M673,86h1v3h-1z M672,85h1v1h-1z M672,89h1v1h-1z M681,86h1v3h-1z M680,85h1v1h-1z M680,89h1v1h-1z M689,86h1v3h-1z M688,85h1v1h-1z M688,89h1v1h-1z M697,86h1v3h-1z M696,85h1v1h-1z M696,89h1v1h-1z M705,86h1v3h-1z M704,85h1v1h-1z M704,89h1v1h-1z M713,86h1v3h-1z M712,85h1v1h-1z M712,89h1v1h-1z M721,86h1v3h-1z M720,85h1v1h-1z M720,89h1v1h-1z M729,86h1v3h-1z M728,85h1v1h-1z M728,89h1v1h-1z M737,86h1v3h-1z M736,85h1v1h-1z M736,89h1v1h-1z M745,86h1v3h-1z M744,85h1v1h-1z M744,89h1v1h-1z M753,86h1v3h-1z M752,85h1v1h-1z M752,89h1v1h-1z M761,86h1v3h-1z M760,85h1v1h-1z M760,89h1v1h-1z M769,86h1v3h-1z M768,85h1v1h-1z M768,89h1v1h-1z M777,86h1v3h-1z M776,85h1v1h-1z M776,89h1v1h-1z M785,86h1v3h-1z M784,85h1v1h-1z M784,89h1v1h-1z M793,86h1v3h-1z M792,85h1v1h-1z M792,89h1v1h-1z M801,86h1v3h-1z M800,85h1v1h-1z M800,89h1v1h-1z M809,86h1v3h-1z M808,85h1v1h-1z M808,89h1v1h-1z M817,86h1v3h-1z M816,85h1v1h-1z M816,89h1v1h-1z M825,86h1v3h-1z M824,85h1v1h-1z M824,89h1v1h-1z M833,86h1v3h-1z M832,85h1v1h-1z M832,89h1v1h-1z M841,86h1v3h-1z M840,85h1v1h-1z M840,89h1v1h-1z M849,86h1v3h-1z M848,85h1v1h-1z M848,89h1v1h-1z M857,86h1v3h-1z M856,85h1v1h-1z M856,89h1v1h-1z M865,86h1v3h-1z M864,85h1v1h-1z M864,89h1v1h-1z M873,86h1v3h-1z M872,85h1v1h-1z M872,89h1v1h-1z M881,86h1v3h-1z M880,85h1v1h-1z M880,89h1v1h-1z M889,86h1v3h-1z M888,85h1v1h-1z M888,89h1v1h-1z M897,86h1v3h-1z M896,85h1v1h-1z M896,89h1v1h-1z M905,86h1v3h-1z M904,85h1v1h-1z M904,89h1v1h-1z M913,86h1v3h-1z M912,85h1v1h-1z M912,89h1v1h-1z M921,86h1v3h-1z M920,85h1v1h-1z M920,89h1v1h-1z M929,86h1v3h-1z M928,85h1v1h-1z M928,89h1v1h-1z M937,86h1v3h-1z M936,85h1v1h-1z M936,89h1v1h-1z M945,86h1v3h-1z M944,85h1v1h-1z M944,89h1v1h-1z " fill="#0c0c78"/>
<path d="M159,84h1v1h-1z M159,90h1v1h-1z M167,84h1v1h-1z M167,90h1v1h-1z M175,84h1v1h-1z M175,90h1v1h-1z M183,84h1v1h-1z M183,90h1v1h-1z M191,84h1v1h-1z M191,90h1v1h-1z M199,84h1v1h-1z M199,90h1v1h-1z M207,84h1v1h-1z M207,90h1v1h-1z M215,84h1v1h-1z M215,90h1v1h-1z M223,84h1v1h-1z M223,90h1v1h-1z M231,84h1v1h-1z M231,90h1v1h-1z M239,84h1v1h-1z M239,90h1v1h-1z M247,84h1v1h-1z M247,90h1v1h-1z M255,84h1v1h-1z M255,90h1v1h-1z M263,84h1v1h-1z M263,90h1v1h-1z M271,84h1v1h-1z M271,90h1v1h-1z M279,84h1v1h-1z M279,90h1v1h-1z M287,84h1v1h-1z M287,90h1v1h-1z M295,84h1v1h-1z M295,90h1v1h-1z M303,84h1v1h-1z M303,90h1v1h-1z M311,84h1v1h-1z M311,90h1v1h-1z M319,84h1v1h-1z M319,90h1v1h-1z M327,84h1v1h-1z M327,90h1v1h-1z M335,84h1v1h-1z M335,90h1v1h-1z M343,84h1v1h-1z M343,90h1v1h-1z M351,84h1v1h-1z M351,90h1v1h-1z M359,84h1v1h-1z M359,90h1v1h-1z M367,84h1v1h-1z M367,90h1v1h-1z M375,84h1v1h-1z M375,90h1v1h-1z M383,84h1v1h-1z M383,90h1v1h-1z M391,84h1v1h-1z M391,90h1v1h-1z M399,84h1v1h-1z M399,90h1v1h-1z M407,84h1v1h-1z M407,90h1v1h-1z M415,84h1v1h-1z M415,90h1v1h-1z M423,84h1v1h-1z M423,90h1v1h-1z M431,84h1v1h-1z M431,90h1v1h-1z M439,84h1v1h-1z M439,90h1v1h-1z M447,84h1v1h-1z M447,90h1v1h-1z M455,84h1v1h-1z M455,90h1v1h-1z M463,84h1v1h-1z M463,90h1v1h-1z M471,84h1v1h-1z M471,90h1v1h-1z M479,84h1v1h-1z M479,90h1v1h-1z M487,84h1v1h-1z M487,90h1v1h-1z M495,84h1v1h-1z M495,90h1v1h-1z M503,84h1v1h-1z M503,90h1v1h-1z M511,84h1v1h-1z M511,90h1v1h-1z M519,84h1v1h-1z M519,90h1v1h-1z M527,84h1v1h-1z M527,90h1v1h-1z M535,84h1v1h-1z M535,90h1v1h-1z M543,84h1v1h-1z M543,90h1v1h-1z M551,84h1v1h-1z M551,90h1v1h-1z M559,84h1v1h-1z M559,90h1v1h-1z M567,84h1v1h-1z M567,90h1v1h-1z M575,84h1v1h-1z M575,90h1v1h-1z M583,84h1v1h-1z M583,90h1v1h-1z M591,84h1v1h-1z M591,90h1v1h-1z M599,84h1v1h-1z M599,90h1v1h-1z M607,84h1v1h-1z M607,90h1v1h-1z M615,84h1v1h-1z M615,90h1v1h-1z M623,84h1v1h-1z M623,90h1v1h-1z M631,84h1v1h-1z M631,90h1v1h-1z M639,84h1v1h-1z M639,90h1v1h-1z M647,84h1v1h-1z M647,90h1v1h-1z M655,84h1v1h-1z M655,90h1v1h-1z M663,84h1v1h-1z M663,90h1v1h-1z M671,84h1v1h-1z M671,90h1v1h-1z M679,84h1v1h-1z M679,90h1v1h-1z M687,84h1v1h-1z M687,90h1v1h-1z M695,84h1v1h-1z M695,90h1v1h-1z M703,84h1v1h-1z M703,90h1v1h-1z M711,84h1v1h-1z M711,90h1v1h-1z M719,84h1v1h-1z M719,90h1v1h-1z M727,84h1v1h-1z M727,90h1v1h-1z M735,84h1v1h-1z M735,90h1v1h-1z M743,84h1v1h-1z M743,90h1v1h-1z M751,84h1v1h-1z M751,90h1v1h-1z M759,84h1v1h-1z M759,90h1v1h-1z M767,84h1v1h-1z M767,90h1v1h-1z M775,84h1v1h-1z M775,90h1v1h-1z M783,84h1v1h-1z M783,90h1v1h-1z M791,84h1v1h-1z M791,90h1v1h-1z M799,84h1v1h-1z M799,90h1v1h-1z M807,84h1v1h-1z M807,90h1v1h-1z M815,84h1v1h-1z M815,90h1v1h-1z M823,84h1v1h-1z M823,90h1v1h-1z M831,84h1v1h-1z M831,90h1v1h-1z M839,84h1v1h-1z M839,90h1v1h-1z M847,84h1v1h-1z M847,90h1v1h-1z M855,84h1v1h-1z M855,90h1v1h-1z M863,84h1v1h-1z M863,90h1v1h-1z M871,84h1v1h-1z M871,90h1v1h-1z M879,84h1v1h-1z M879,90h1v1h-1z M887,84h1v1h-1z M887,90h1v1h-1z M895,84h1v1h-1z M895,90h1v1h-1z M903,84h1v1h-1z M903,90h1v1h-1z M911,84h1v1h-1z M911,90h1v1h-1z M919,84h1v1h-1z M919,90h1v1h-1z M927,84h1v1h-1z M927,90h1v1h-1z M935,84h1v1h-1z M935,90h1v1h-1z M943,84h1v1h-1z M943,90h1v1h-1z " fill="#0c0c78" fill-opacity="0.5"/>
<rect x="157" y="103" width="792" height="1" fill="#0c66aa"/>
<path d="M161,102h1v3h-1z M160,101h1v1h-1z M160,105h1v1h-1z M169,102h1v3h-1z M168,101h1v1h-1z M168,105h1v1h-1z M177,102h1v3h-1z M176,101h1v1h-1z M176,105h1v1h-1z M185,102h1v3h-1z M184,101h1v1h-1z M184,105h1v1h-1z M193,102h1v3h-1z M192,101h1v1h-1z M192,105h1v1h-1z M201,102h1v3h-1z M200,101h1v1h-1z M200,105h1v1h-1z M209,102h1v3h-1z M208,101h1v1h-1z M208,105h1v1h-1z M217,102h1v3h-1z M216,101h1v1h-1z M216,105h1v1h-1z M225,102h1v3h-1z M224,101h1v1h-1z M224,105h1v1h-1z M233,102h1v3h-1z M232,101h1v1h-1z M232,105h1v1h-1z M241,102h1v3h-1z M240,101h1v1h-1z M240,105h1v1h-1z M249,102h1v3h-1z M248,101h1v1h-1z M248,105h1v1h-1z M257,102h1v3h-1z M256,101h1v1h-1z M256,105h1v1h-1z M265,102h1v3h-1z M264,101h1v1h-1z M264,105h1v1h-1z M273,102h1v3h-1z M272,101h1v1h-1z M272,105h1v1h-1z M281,102h1v3h-1z M280,101h1v1h-1z M280,105h1v1h-1z M289,102h1v3h-1z M288,101h1v1h-1z M288,105h1v1h-1z M297,102h1v3h-1z M296,101h1v1h-1z M296,105h1v1h-1z M305,102h1v3h-1z M304,101h1v1h-1z M304,105h1v1h-1z M313,102h1v3h-1z M312,101h1v1h-1z M312,105h1v1h-1z M321,102h1v3h-1z M320,101h1v1h-1z M320,105h1v1h-1z M329,102h1v3h-1z M328,101h1v1h-1z M328,105h1v1h-1z M337,102h1v3h-1z M336,101h1v1h-1z M336,105h1v1h-1z M345,102h1v3h-1z M344,101h1v1h-1z M344,105h1v1h-1z M353,102h1v3h-1z M352,101h1v1h-1z M352,105h1v1h-1z M361,102h1v3h-1z M360,101h1v1h-1z M360,105h1v1h-1z M369,102h1v3h-1z M368,101h1v1h-1z M368,105h1v1h-1z M377,102h1v3h-1z M376,101h1v1h-1z M376,105h1v1h-1z M385,102h1v3h-1z M384,101h1v1h-1z M384,105h1v1h-1z M393,102h1v3h-1z M392,101h1v1h-1z M392,105h1v1h-1z M401,102h1v3h-1z M400,101h1v1h-1z M400,105h1v1h-1z M409,102h1v3h-1z M408,101h1v1h-1z M408,105h1v1h-1z M417,102h1v3h-1z M416,101h1v1h-1z M416,105h1v1h-1z M425,102h1v3h-1z M424,101h1v1h-1z M424,105h1v1h-1z M433,102h1v3h-1z M432,101h1v1h-1z M432,105h1v1h-1z M441,102h1v3h-1z M440,101h1v1h-1z M440,105h1v1h-1z M449,102h1v3h-1z M448,101h1v1h-1z M448,105h1v1h-1z M457,102h1v3h-1z M456,101h1v1h-1z M456,105h1v1h-1z M465,102h1v3h-1z M464,101h1v1h-1z M464,105h1v1h-1z M473,102h1v3h-1z M472,101h1v1h-1z M472,105h1v1h-1z M481,102h1v3h-1z M480,101h1v1h-1z M480,105h1v1h-1z M489,102h1v3h-1z M488,101h1v1h-1z M488,105h1v1h-1z M497,102h1v3h-1z M496,101h1v1h-1z M496,105h1v1h-1z M505,102h1v3h-1z M504,101h1v1h-1z M504,105h1v1h-1z M513,102h1v3h-1z M512,101h1v1h-1z M512,105h1v1h-1z M521,102h1v3h-1z M520,101h1v1h-1z M520,105h1v1h-1z M529,102h1v3h-1z M528,101h1v1h-1z M528,105h1v1h-1z M537,102h1v3h-1z M536,101h1v1h-1z M536,105h1v1h-1z M545,102h1v3h-1z M544,101h1v1h-1z M544,105h1v1h-1z M553,102h1v3h-1z M552,101h1v1h-1z M552,105h1v1h-1z M561,102h1v3h-1z M560,101h1v1h-1z M560,105h1v1h-1z M569,102h1v3h-1z M568,101h1v1h-1z M568,105h1v1h-1z M577,102h1v3h-1z M576,101h1v1h-1z M576,105h1v1h-1z M585,102h1v3h-1z M584,101h1v1h-1z M584,105h1v1h-1z M593,102h1v3h-1z M592,101h1v1h-1z M592,105h1v1h-1z M601,102h1v3h-1z M600,101h1v1h-1z M600,105h1v1h-1z M609,102h1v3h-1z M608,101h1v1h-1z M608,105h1v1h-1z M617,102h1v3h-1z M616,101h1v1h-1z M616,105h1v1h-1z M625,102h1v3h-1z M624,101h1v1h-1z M624,105h1v1h-1z M633,102h1v3h-1z M632,101h1v1h-1z M632,105h1v1h-1z M641,102h1v3h-1z M640,101h1v1h-1z M640,105h1v1h-1z M649,102h1v3h-1z M648,101h1v1h-1z M648,105h1v1h-1z M657,102h1v3h-1z M656,101h1v1h-1z M656,105h1v1h-1z M665,102h1v3h-1z M664,101h1v1h-1z M664,105h1v1h-1z M673,102h1v3h-1z M672,101h1v1h-1z M672,105h1v1h-1z M681,102h1v3h-1z M680,101h1v1h-1z M680,105h1v1h-1z M689,102h1v3h-1z M688,101h1v1h-1z M688,105h1v1h-1z M697,102h1v3h-1z M696,101h1v1h-1z M696,105h1v1h-1z M705,102h1v3h-1z M704,101h1v1h-1z M704,105h1v1h-1z M713,102h1v3h-1z M712,101h1v1h-1z M712,105h1v1h-1z M721,102h1v3h-1z M720,101h1v1h-1z M720,105h1v1h-1z M729,102h1v3h-1z M728,101h1v1h-1z M728,105h1v1h-1z M737,102h1v3h-1z M736,101h1v1h-1z M736,105h1v1h-1z M745,102h1v3h-1z M744,101h1v1h-1z M744,105h1v1h-1z M753,102h1v3h-1z M752,101h1v1h-1z M752,105h1v1h-1z M761,102h1v3h-1z M760,101h1v1h-1z M760,105h1v1h-1z M769,102h1v3h-1z M768,101h1v1h-1z M768,105h1v1h-1z M777,102h1v3h-1z M776,101h1v1h-1z M776,105h1v1h-1z M785,102h1v3h-1z M784,101h1v1h-1z M784,105h1v1h-1z M793,102h1v3h-1z M792,101h1v1h-1z M792,105h1v1h-1z M801,102h1v3h-1z M800,101h1v1h-1z M800,105h1v1h-1z M809,102h1v3h-1z M808,101h1v1h-1z M808,105h1v1h-1z M817,102h1v3h-1z M816,101h1v1h-1z M816,105h1v1h-1z M825,102h1v3h-1z M824,101h1v1h-1z M824,105h1v1h-1z M833,102h1v3h-1z M832,101h1v1h-1z M832,105h1v1h-1z M841,102h1v3h-1z M840,101h1v1h-1z M840,105h1v1h-1z M849,102h1v3h-1z M848,101h1v1h-1z M848,105h1v1h-1z M857,102h1v3h-1z M856,101h1v1h-1z M856,105h1v1h-1z M865,102h1v3h-1z M864,101h1v1h-1z M864,105h1v1h-1z M873,102h1v3h-1z M872,101h1v1h-1z M872,105h1v1h-1z M881,102h1v3h-1z M880,101h1v1h-1z M880,105h1v1h-1z M889,102h1v3h-1z M888,101h1v1h-1z M888,105h1v1h-1z M897,102h1v3h-1z M896,101h1v1h-1z M896,105h1v1h-1z M905,102h1v3h-1z M904,101h1v1h-1z M904,105h1v1h-1z M913,102h1v3h-1z M912,101h1v1h-1z M912,105h1v1h-1z M921,102h1v3h-1z M920,101h1v1h-1z M920,105h1v1h-1z M929,102h1v3h-1z M928,101h1v1h-1z M928,105h1v1h-1z M937,102h1v3h-1z M936,101h1v1h-1z M936,105h1v1h-1z M945,102h1v3h-1z M944,101h1v1h-1z M944,105h1v1h-1z " fill="#0c66aa"/>
<path d="M159,100h1v1h-1z M159,106h1v1h-1z M167,100h1v1h-1z M167,106h1v1h-1z M175,100h1v1h-1z M175,106h1v1h-1z M183,100h1v1h-1z M183,106h1v1h-1z M191,100h1v1h-1z M191,106h1v1h-1z M199,100h1v1h-1z M199,106h1v1h-1z M207,100h1v1h-1z M207,106h1v1h-1z M215,100h1v1h-1z M215,106h1v1h-1z M223,100h1v1h-1z M223,106h1v1h-1z M231,100h1v1h-1z M231,106h1v1h-1z M239,100h1v1h-1z M239,106h1v1h-1z M247,100h1v1h-1z M247,106h1v1h-1z M255,100h1v1h-1z M255,106h1v1h-1z M263,100h1v1h-1z M263,106h1v1h-1z M271,100h1v1h-1z M271,106h1v1h-1z M279,100h1v1h-1z M279,106h1v1h-1z M287,100h1v1h-1z M287,106h1v1h-1z M295,100h1v1h-1z M295,106h1v1h-1z M303,100h1v1h-1z M303,106h1v1h-1z M311,100h1v1h-1z M311,106h1v1h-1z M319,100h1v1h-1z M319,106h1v1h-1z M327,100h1v1h-1z M327,106h1v1h-1z M335,100h1v1h-1z M335,106h1v1h-1z M343,100h1v1h-1z M343,106h1v1h-1z M351,100h1v1h-1z M351,106h1v1h-1z M359,100h1v1h-1z M359,106h1v1h-1z M367,100h1v1h-1z M367,106h1v1h-1z M375,100h1v1h-1z M375,106h1v1h-1z M383,100h1v1h-1z M383,106h1v1h-1z M391,100h1v1h-1z M391,106h1v1h-1z M399,100h1v1h-1z M399,106h1v1h-1z M407,100h1v1h-1z M407,106h1v1h-1z M415,100h1v1h-1z M415,106h1v1h-1z M423,100h1v1h-1z M423,106h1v1h-1z M431,100h1v1h-1z M431,106h1v1h-1z M439,100h1v1h-1z M439,106h1v1h-1z M447,100h1v1h-1z M447,106h1v1h-1z M455,100h1v1h-1z M455,106h1v1h-1z M463,100h1v1h-1z M463,106h1v1h-1z M471,100h1v1h-1z M471,106h1v1h-1z M479,100h1v1h-1z M479,106h1v1h-1z M487,100h1v1h-1z M487,106h1v1h-1z M495,100h1v1h-1z M495,106h1v1h-1z M503,100h1v1h-1z M503,106h1v1h-1z M511,100h1v1h-1z M511,106h1v1h-1z M519,100h1v1h-1z M519,106h1v1h-1z M527,100h1v1h-1z M527,106h1v1h-1z M535,100h1v1h-1z M535,106h1v1h-1z M543,100h1v1h-1z M543,106h1v1h-1z M551,100h1v1h-1z M551,106h1v1h-1z M559,100h1v1h-1z M559,106h1v1h-1z M567,100h1v1h-1z M567,106h1v1h-1z M575,100h1v1h-1z M575,106h1v1h-1z M583,100h1v1h-1z M583,106h1v1h-1z M591,100h1v1h-1z M591,106h1v1h-1z M599,100h1v1h-1z M599,106h1v1h-1z M607,100h1v1h-1z M607,106h1v1h-1z M615,100h1v1h-1z M615,106h1v1h-1z M623,100h1v1h-1z M623,106h1v1h-1z M631,100h1v1h-1z M631,106h1v1h-1z M639,100h1v1h-1z M639,106h1v1h-1z M647,100h1v1h-1z M647,106h1v1h-1z M655,100h1v1h-1z M655,106h1v1h-1z M663,100h1v1h-1z M663,106h1v1h-1z M671,100h1v1h-1z M671,106h1v1h-1z M679,100h1v1h-1z M679,106h1v1h-1z M687,100h1v1h-1z M687,106h1v1h-1z M695,100h1v1h-1z M695,106h1v1h-1z M703,100h1v1h-1z M703,106h1v1h-1z M711,100h1v1h-1z M711,106h1v1h-1z M719,100h1v1h-1z M719,106h1v1h-1z M727,100h1v1h-1z M727,106h1v1h-1z M735,100h1v1h-1z M735,106h1v1h-1z M743,100h1v1h-1z M743,106h1v1h-1z M751,100h1v1h-1z M751,106h1v1h-1z M759,100h1v1h-1z M759,106h1v1h-1z M767,100h1v1h-1z M767,106h1v1h-1z M775,100h1v1h-1z M775,106h1v1h-1z M783,100h1v1h-1z M783,106h1v1h-1z M791,100h1v1h-1z M791,106h1v1h-1z M799,100h1v1h-1z M799,106h1v1h-1z M807,100h1v1h-1z M807,106h1v1h-1z M815,100h1v1h-1z M815,106h1v1h-1z M823,100h1v1h-1z M823,106h1v1h-1z M831,100h1v1h-1z M831,106h1v1h-1z M839,100h1v1h-1z M839,106h1v1h-1z M847,100h1v1h-1z M847,106h1v1h-1z M855,100h1v1h-1z M855,106h1v1h-1z M863,100h1v1h-1z M863,106h1v1h-1z M871,100h1v1h-1z M871,106h1v1h-1z M879,100h1v1h-1z M879,106h1v1h-1z M887,100h1v1h-1z M887,106h1v1h-1z M895,100h1v1h-1z M895,106h1v1h-1z M903,100h1v1h-1z M903,106h1v1h-1z M911,100h1v1h-1z M911,106h1v1h-1z M919,100h1v1h-1z M919,106h1v1h-1z M927,100h1v1h-1z M927,106h1v1h-1z M935,100h1v1h-1z M935,106h1v1h-1z M943,100h1v1h-1z M943,106h1v1h-1z " fill="#0c66aa" fill-opacity="0.5"/>
<rect x="157" y="119" width="792" height="1" fill="#0c0c78"/>
<path d="M161,118h1v3h-1z M160,117h1v1h-1z M160,121h1v1h-1z M169,118h1v3h-1z M168,117h1v1h-1z M168,121h1v1h-1z M177,118h1v3h-1z M176,117h1v1h-1z M176,121h1v1h-1z M185,118h1v3h-1z M184,117h1v1h-1z M184,121h1v1h-1z M193,118h1v3h-1z M192,117h1v1h-1z M192,121h1v1h-1z M201,118h1v3h-1z M200,117h1v1h-1z M200,121h1v1h-1z M209,118h1v3h-1z M208,117h1v1h-1z M208,121h1v1h-1z M217,118h1v3h-1z M216,117h1v1h-1z M216,121h1v1h-1z M225,118h1v3h-1z M224,117h1v1h-1z M224,121h1v1h-1z M233,118h1v3h-1z M232,117h1v1h-1z M232,121h1v1h-1z M241,118h1v3h-1z M240,117h1v1h-1z M240,121h1v1h-1z M249,118h1v3h-1z M248,117h1v1h-1z M248,121h1v1h-1z M257,118h1v3h-1z M256,117h1v1h-1z M256,121h1v1h-1z M265,118h1v3h-1z M264,117h1v1h-1z M264,121h1v1h-1z M273,118h1v3h-1z M272,117h1v1h-1z M272,121h1v1h-1z M281,118h1v3h-1z M280,117h1v1h-1z M280,121h1v1h-1z M289,118h1v3h-1z M288,117h1v1h-1z M288,121h1v1h-1z M297,118h1v3h-1z M296,117h1v1h-1z M296,121h1v1h-1z M305,118h1v3h-1z M304,117h1v1h-1z M304,121h1v1h-1z M313,118h1v3h-1z M312,117h1v1h-1z M312,121h1v1h-1z M321,118h1v3h-1z M320,117h1v1h-1z M320,121h1v1h-1z M329,118h1v3h-1z M328,117h1v1h-1z M328,121h1v1h-1z M337,118h1v3h-1z M336,117h1v1h-1z M336,121h1v1h-1z M345,118h1v3h-1z M344,117h1v1h-1z M344,121h1v1h-1z M353,118h1v3h-1z M352,117h1v1h-1z M352,121h1v1h-1z M361,118h1v3h-1z M360,117h1v1h-1z M360,121h1v1h-1z M369,118h1v3h-1z M368,117h1v1h-1z M368,121h1v1h-1z M377,118h1v3h-1z M376,117h1v1h-1z M376,121h1v1h-1z M385,118h1v3h-1z M384,117h1v1h-1z M384,121h1v1h-1z M393,118h1v3h-1z M392,117h1v1h-1z M392,121h1v1h-1z M401,118h1v3h-1z M400,117h1v1h-1z M400,121h1v1h-1z M409,118h1v3h-1z M408,117h1v1h-1z M408,121h1v1h-1z M417,118h1v3h-1z M416,117h1v1h-1z M416,121h1v1h-1z M425,118h1v3h-1z M424,117h1v1h-1z M424,121h1v1h-1z M433,118h1v3h-1z M432,117h1v1h-1z M432,121h1v1h-1z M441,118h1v3h-1z M440,117h1v1h-1z M440,121h1v1h-1z M449,118h1v3h-1z M448,117h1v1h-1z M448,121h1v1h-1z M457,118h1v3h-1z M456,117h1v1h-1z M456,121h1v1h-1z M465,118h1v3h-1z M464,117h1v1h-1z M464,121h1v1h-1z M473,118h1v3h-1z M472,117h1v1h-1z M472,121h1v1h-1z M481,118h1v3h-1z M480,117h1v1h-1z M480,121h1v1h-1z M489,118h1v3h-1z M488,117h1v1h-1z M488,121h1v1h-1z M497,118h1v3h-1z M496,117h1v1h-1z M496,121h1v1h-1z M505,118h1v3h-1z M504,117h1v1h-1z M504,121h1v1h-1z M513,118h1v3h-1z M512,117h1v1h-1z M512,121h1v1h-1z M521,118h1v3h-1z M520,117h1v1h-1z M520,121h1v1h-1z M529,118h1v3h-1z M528,117h1v1h-1z M528,121h1v1h-1z M537,118h1v3h-1z M536,117h1v1h-1z M536,121h1v1h-1z M545,118h1v3h-1z M544,117h1v1h-1z M544,121h1v1h-1z M553,118h1v3h-1z M552,117h1v1h-1z M552,121h1v1h-1z M561,118h1v3h-1z M560,117h1v1h-1z M560,121h1v1h-1z M569,118h1v3h-1z M568,117h1v1h-1z M568,121h1v1h-1z M577,118h1v3h-1z M576,117h1v1h-1z M576,121h1v1h-1z M585,118h1v3h-1z M584,117h1v1h-1z M584,121h1v1h-1z M593,118h1v3h-1z M592,117h1v1h-1z M592,121h1v1h-1z M601,118h1v3h-1z M600,117h1v1h-1z M600,121h1v1h-1z M609,118h1v3h-1z M608,117h1v1h-1z M608,121h1v1h-1z M617,118h1v3h-1z M616,117h1v1h-1z M616,121h1v1h-1z M625,118h1v3h-1z M624,117h1v1h-1z M624,121h1v1h-1z M633,118h1v3h-1z M632,117h1v1h-1z M632,121h1v1h-1z M641,118h1v3h-1z M640,117h1v1h-1z M640,121h1v1h-1z M649,118h1v3h-1z M648,117h1v1h-1z M648,121h1v1h-1z M657,118h1v3h-1z M656,117h1v1h-1z M656,121h1v1h-1z M665,118h1v3h-1z M664,117h1v1h-1z M664,121h1v1h-1z M673,118h1v3h-1z M672,117h1v1h-1z M672,121h1v1h-1z M681,118h1v3h-1z M680,117h1v1h-1z M680,121h1v1h-1z M689,118h1v3h-1z M688,117h1v1h-1z M688,121h1v1h-1z M697,118h1v3h-1z M696,117h1v1h-1z M696,121h1v1h-1z M705,118h1v3h-1z M704,117h1v1h-1z M704,121h1v1h-1z M713,118h1v3h-1z M712,117h1v1h-1z M712,121h1v1h-1z M721,118h1v3h-1z M720,117h1v1h-1z M720,121h1v1h-1z M729,118h1v3h-1z M728,117h1v1h-1z M728,121h1v1h-1z M737,118h1v3h-1z M736,117h1v1h-1z M736,121h1v1h-1z M745,118h1v3h-1z M744,117h1v1h-1z M744,121h1v1h-1z M753,118h1v3h-1z M752,117h1v1h-1z M752,121h1v1h-1z M761,118h1v3h-1z M760,117h1v1h-1z M760,121h1v1h-1z M769,118h1v3h-1z M768,117h1v1h-1z M768,121h1v1h-1z M777,118h1v3h-1z M776,117h1v1h-1z M776,121h1v1h-1z M785,118h1v3h-1z M784,117h1v1h-1z M784,121h1v1h-1z M793,118h1v3h-1z M792,117h1v1h-1z M792,121h1v1h-1z M801,118h1v3h-1z M800,117h1v1h-1z M800,121h1v1h-1z M809,118h1v3h-1z M808,117h1v1h-1z M808,121h1v1h-1z M817,118h1v3h-1z M816,117h1v1h-1z M816,121h1v1h-1z M825,118h1v3h-1z M824,117h1v1h-1z M824,121h1v1h-1z M833,118h1v3h-1z M832,117h1v1h-1z M832,121h1v1h-1z M841,118h1v3h-1z M840,117h1v1h-1z M840,121h1v1h-1z M849,118h1v3h-1z M848,117h1v1h-1z M848,121h1v1h-1z M857,118h1v3h-1z M856,117h1v1h-1z M856,121h1v1h-1z M865,118h1v3h-1z M864,117h1v1h-1z M864,121h1v1h-1z M873,118h1v3h-1z M872,117h1v1h-1z M872,121h1v1h-1z M881,118h1v3h-1z M880,117h1v1h-1z M880,121h1v1h-1z M889,118h1v3h-1z M888,117h1v1h-1z M888,121h1v1h-1z M897,118h1v3h-1z M896,117h1v1h-1z M896,121h1v1h-1z M905,118h1v3h-1z M904,117h1v1h-1z M904,121h1v1h-1z M913,118h1v3h-1z M912,117h1v1h-1z M912,121h1v1h-1z M921,118h1v3h-1z M920,117h1v1h-1z M920,121h1v1h-1z M929,118h1v3h-1z M928,117h1v1h-1z M928,121h1v1h-1z M937,118h1v3h-1z M936,117h1v1h-1z M936,121h1v1h-1z M945,118h1v3h-1z M944,117h1v1h-1z M944,121h1v1h-1z " fill="#0c0c78"/>
<path d="M159,116h1v1h-1z M159,122h1v1h-1z M167,116h1v1h-1z M167,122h1v1h-1z M175,116h1v1h-1z M175,122h1v1h-1z M183,116h1v1h-1z M183,122h1v1h-1z M191,116h1v1h-1z M191,122h1v1h-1z M199,116h1v1h-1z M199,122h1v1h-1z M207,116h1v1h-1z M207,122h1v1h-1z M215,116h1v1h-1z M215,122h1v1h-1z M223,116h1v1h-1z M223,122h1v1h-1z M231,116h1v1h-1z M231,122h1v1h-1z M239,116h1v1h-1z M239,122h1v1h-1z M247,116h1v1h-1z M247,122h1v1h-1z M255,116h1v1h-1z M255,122h1v1h-1z M263,116h1v1h-1z M263,122h1v1h-1z M271,116h1v1h-1z M271,122h1v1h-1z M279,116h1v1h-1z M279,122h1v1h-1z M287,116h1v1h-1z M287,122h1v1h-1z M295,116h1v1h-1z M295,122h1v1h-1z M303,116h1v1h-1z M303,122h1v1h-1z M311,116h1v1h-1z M311,122h1v1h-1z M319,116h1v1h-1z M319,122h1v1h-1z M327,116h1v1h-1z M327,122h1v1h-1z M335,116h1v1h-1z M335,122h1v1h-1z M343,116h1v1h-1z M343,122h1v1h-1z M351,116h1v1h-1z M351,122h1v1h-1z M359,116h1v1h-1z M359,122h1v1h-1z M367,116h1v1h-1z M367,122h1v1h-1z M375,116h1v1h-1z M375,122h1v1h-1z M383,116h1v1h-1z M383,122h1v1h-1z M391,116h1v1h-1z M391,122h1v1h-1z M399,116h1v1h-1z M399,122h1v1h-1z M407,116h1v1h-1z M407,122h1v1h-1z M415,116h1v1h-1z M415,122h1v1h-1z M423,116h1v1h-1z M423,122h1v1h-1z M431,116h1v1h-1z M431,122h1v1h-1z M439,116h1v1h-1z M439,122h1v1h-1z M447,116h1v1h-1z M447,122h1v1h-1z M455,116h1v1h-1z M455,122h1v1h-1z M463,116h1v1h-1z M463,122h1v1h-1z M471,116h1v1h-1z M471,122h1v1h-1z M479,116h1v1h-1z M479,122h1v1h-1z M487,116h1v1h-1z M487,122h1v1h-1z M495,116h1v1h-1z M495,122h1v1h-1z M503,116h1v1h-1z M503,122h1v1h-1z M511,116h1v1h-1z M511,122h1v1h-1z M519,116h1v1h-1z M519,122h1v1h-1z M527,116h1v1h-1z M527,122h1v1h-1z M535,116h1v1h-1z M535,122h1v1h-1z M543,116h1v1h-1z M543,122h1v1h-1z M551,116h1v1h-1z M551,122h1v1h-1z M559,116h1v1h-1z M559,122h1v1h-1z M567,116h1v1h-1z M567,122h1v1h-1z M575,116h1v1h-1z M575,122h1v1h-1z M583,116h1v1h-1z M583,122h1v1h-1z M591,116h1v1h-1z M591,122h1v1h-1z M599,116h1v1h-1z M599,122h1v1h-1z M607,116h1v1h-1z M607,122h1v1h-1z M615,116h1v1h-1z M615,122h1v1h-1z M623,116h1v1h-1z M623,122h1v1h-1z M631,116h1v1h-1z M631,122h1v1h-1z M639,116h1v1h-1z M639,122h1v1h-1z M647,116h1v1h-1z M647,122h1v1h-1z M655,116h1v1h-1z M655,122h1v1h-1z M663,116h1v1h-1z M663,122h1v1h-1z M671,116h1v1h-1z M671,122h1v1h-1z M679,116h1v1h-1z M679,122h1v1h-1z M687,116h1v1h-1z M687,122h1v1h-1z M695,116h1v1h-1z M695,122h1v1h-1z M703,116h1v1h-1z M703,122h1v1h-1z M711,116h1v1h-1z M711,122h1v1h-1z M719,116h1v1h-1z M719,122h1v1h-1z M727,116h1v1h-1z M727,122h1v1h-1z M735,116h1v1h-1z M735,122h1v1h-1z M743,116h1v1h-1z M743,122h1v1h-1z M751,116h1v1h-1z M751,122h1v1h-1z M759,116h1v1h-1z M759,122h1v1h-1z M767,116h1v1h-1z M767,122h1v1h-1z M775,116h1v1h-1z M775,122h1v1h-1z M783,116h1v1h-1z M783,122h1v1h-1z M791,116h1v1h-1z M791,122h1v1h-1z M799,116h1v1h-1z M799,122h1v1h-1z M807,116h1v1h-1z M807,122h1v1h-1z M815,116h1v1h-1z M815,122h1v1h-1z M823,116h1v1h-1z M823,122h1v1h-1z M831,116h1v1h-1z M831,122h1v1h-1z M839,116h1v1h-1z M839,122h1v1h-1z M847,116h1v1h-1z M847,122h1v1h-1z M855,116h1v1h-1z M855,122h1v1h-1z M863,116h1v1h-1z M863,122h1v1h-1z M871,116h1v1h-1z M871,122h1v1h-1z M879,116h1v1h-1z M879,122h1v1h-1z M887,116h1v1h-1z M887,122h1v1h-1z M895,116h1v1h-1z M895,122h1v1h-1z M903,116h1v1h-1z M903,122h1v1h-1z M911,116h1v1h-1z M911,122h1v1h-1z M919,116h1v1h-1z M919,122h1v1h-1z M927,116h1v1h-1z M927,122h1v1h-1z M935,116h1v1h-1z M935,122h1v1h-1z M943,116h1v1h-1z M943,122h1v1h-1z " fill="#0c0c78" fill-opacity="0.5"/>
<rect x="157" y="135" width="792" height="1" fill="#0c0c78"/>
<path d="M161,134h1v3h-1z M160,133h1v1h-1z M160,137h1v1h-1z M169,134h1v3h-1z M168,133h1v1h-1z M168,137h1v1h-1z M177,134h1v3h-1z M176,133h1v1h-1z M176,137h1v1h-1z M185,134h1v3h-1z M184,133h1v1h-1z M184,137h1v1h-1z M193,134h1v3h-1z M192,133h1v1h-1z M192,137h1v1h-1z M201,134h1v3h-1z M200,133h1v1h-1z M200,137h1v1h-1z M209,134h1v3h-1z M208,133h1v1h-1z M208,137h1v1h-1z M217,134h1v3h-1z M216,133h1v1h-1z M216,137h1v1h-1z M225,134h1v3h-1z M224,133h1v1h-1z M224,137h1v1h-1z M233,134h1v3h-1z M232,133h1v1h-1z M232,137h1v1h-1z M241,134h1v3h-1z M240,133h1v1h-1z M240,137h1v1h-1z M249,134h1v3h-1z M248,133h1v1h-1z M248,137h1v1h-1z M257,134h1v3h-1z M256,133h1v1h-1z M256,137h1v1h-1z M265,134h1v3h-1z M264,133h1v1h-1z M264,137h1v1h-1z M273,134h1v3h-1z M272,133h1v1h-1z M272,137h1v1h-1z M281,134h1v3h-1z M280,133h1v1h-1z M280,137h1v1h-1z M289,134h1v3h-1z M288,133h1v1h-1z M288,137h1v1h-1z M297,134h1v3h-1z M296,133h1v1h-1z M296,137h1v1h-1z M305,134h1v3h-1z M304,133h1v1h-1z M304,137h1v1h-1z M313,134h1v3h-1z M312,133h1v1h-1z M312,137h1v1h-1z M321,134h1v3h-1z M320,133h1v1h-1z M320,137h1v1h-1z M329,134h1v3h-1z M328,133h1v1h-1z M328,137h1v1h-1z M337,134h1v3h-1z M336,133h1v1h-1z M336,137h1v1h-1z M345,134h1v3h-1z M344,133h1v1h-1z M344,137h1v1h-1z M353,134h1v3h-1z M352,133h1v1h-1z M352,137h1v1h-1z M361,134h1v3h-1z M360,133h1v1h-1z M360,137h1v1h-1z M369,134h1v3h-1z M368,133h1v1h-1z M368,137h1v1h-1z M377,134h1v3h-1z M376,133h1v1h-1z M376,137h1v1h-1z M385,134h1v3h-1z M384,133h1v1h-1z M384,137h1v1h-1z M393,134h1v3h-1z M392,133h1v1h-1z M392,137h1v1h-1z M401,134h1v3h-1z M400,133h1v1h-1z M400,137h1v1h-1z M409,134h1v3h-1z M408,133h1v1h-1z M408,137h1v1h-1z M417,134h1v3h-1z M416,133h1v1h-1z M416,137h1v1h-1z M425,134h1v3h-1z M424,133h1v1h-1z M424,137h1v1h-1z M433,134h1v3h-1z M432,133h1v1h-1z M432,137h1v1h-1z M441,134h1v3h-1z M440,133h1v1h-1z M440,137h1v1h-1z M449,134h1v3h-1z M448,133h1v1h-1z M448,137h1v1h-1z M457,134h1v3h-1z M456,133h1v1h-1z M456,137h1v1h-1z M465,134h1v3h-1z M464,133h1v1h-1z M464,137h1v1h-1z M473,134h1v3h-1z M472,133h1v1h-1z M472,137h1v1h-1z M481,134h1v3h-1z M480,133h1v1h-1z M480,137h1v1h-1z M489,134h1v3h-1z M488,133h1v1h-1z M488,137h1v1h-1z M497,134h1v3h-1z M496,133h1v1h-1z M496,137h1v1h-1z M505,134h1v3h-1z M504,133h1v1h-1z M504,137h1v1h-1z M513,134h1v3h-1z M512,133h1v1h-1z M512,137h1v1h-1z M521,134h1v3h-1z M520,133h1v1h-1z M520,137h1v1h-1z M529,134h1v3h-1z M528,133h1v1h-1z M528,137h1v1h-1z M537,134h1v3h-1z M536,133h1v1h-1z M536,137h1v1h-1z M545,134h1v3h-1z M544,133h1v1h-1z M544,137h1v1h-1z M553,134h1v3h-1z M552,133h1v1h-1z M552,137h1v1h-1z M561,134h1v3h-1z M560,133h1v1h-1z M560,137h1v1h-1z M569,134h1v3h-1z M568,133h1v1h-1z M568,137h1v1h-1z M577,134h1v3h-1z M576,133h1v1h-1z M576,137h1v1h-1z M585,134h1v3h-1z M584,133h1v1h-1z M584,137h1v1h-1z M593,134h1v3h-1z M592,133h1v1h-1z M592,137h1v1h-1z M601,134h1v3h-1z M600,133h1v1h-1z M600,137h1v1h-1z M609,134h1v3h-1z M608,133h1v1h-1z M608,137h1v1h-1z M617,134h1v3h-1z M616,133h1v1h-1z M616,137h1v1h-1z M625,134h1v3h-1z M624,133h1v1h-1z M624,137h1v1h-1z M633,134h1v3h-1z M632,133h1v1h-1z M632,137h1v1h-1z M641,134h1v3h-1z M640,133h1v1h-1z M640,137h1v1h-1z M649,134h1v3h-1z M648,133h1v1h-1z M648,137h1v1h-1z M657,134h1v3h-1z M656,133h1v1h-1z M656,137h1v1h-1z M665,134h1v3h-1z M664,133h1v1h-1z M664,137h1v1h-1z M673,134h1v3h-1z M672,133h1v1h-1z M672,137h1v1h-1z M681,134h1v3h-1z M680,133h1v1h-1z M680,137h1v1h-1z M689,134h1v3h-1z M688,133h1v1h-1z M688,137h1v1h-1z M697,134h1v3h-1z M696,133h1v1h-1z M696,137h1v1h-1z M705,134h1v3h-1z M704,133h1v1h-1z M704,137h1v1h-1z M713,134h1v3h-1z M712,133h1v1h-1z M712,137h1v1h-1z M721,134h1v3h-1z M720,133h1v1h-1z M720,137h1v1h-1z M729,134h1v3h-1z M728,133h1v1h-1z M728,137h1v1h-1z M737,134h1v3h-1z M736,133h1v1h-1z M736,137h1v1h-1z M745,134h1v3h-1z M744,133h1v1h-1z M744,137h1v1h-1z M753,134h1v3h-1z M752,133h1v1h-1z M752,137h1v1h-1z M761,134h1v3h-1z M760,133h1v1h-1z M760,137h1v1h-1z M769,134h1v3h-1z M768,133h1v1h-1z M768,137h1v1h-1z M777,134h1v3h-1z M776,133h1v1h-1z M776,137h1v1h-1z M785,134h1v3h-1z M784,133h1v1h-1z M784,137h1v1h-1z M793,134h1v3h-1z M792,133h1v1h-1z M792,137h1v1h-1z M801,134h1v3h-1z M800,133h1v1h-1z M800,137h1v1h-1z M809,134h1v3h-1z M808,133h1v1h-1z M808,137h1v1h-1z M817,134h1v3h-1z M816,133h1v1h-1z M816,137h1v1h-1z M825,134h1v3h-1z M824,133h1v1h-1z M824,137h1v1h-1z M833,134h1v3h-1z M832,133h1v1h-1z M832,137h1v1h-1z M841,134h1v3h-1z M840,133h1v1h-1z M840,137h1v1h-1z M849,134h1v3h-1z M848,133h1v1h-1z M848,137h1v1h-1z M857,134h1v3h-1z M856,133h1v1h-1z M856,137h1v1h-1z M865,134h1v3h-1z M864,133h1v1h-1z M864,137h1v1h-1z M873,134h1v3h-1z M872,133h1v1h-1z M872,137h1v1h-1z M881,134h1v3h-1z M880,133h1v1h-1z M880,137h1v1h-1z M889,134h1v3h-1z M888,133h1v1h-1z M888,137h1v1h-1z M897,134h1v3h-1z M896,133h1v1h-1z M896,137h1v1h-1z M905,134h1v3h-1z M904,133h1v1h-1z M904,137h1v1h-1z M913,134h1v3h-1z M912,133h1v1h-1z M912,137h1v1h-1z M921,134h1v3h-1z M920,133h1v1h-1z M920,137h1v1h-1z M929,134h1v3h-1z M928,133h1v1h-1z M928,137h1v1h-1z M937,134h1v3h-1z M936,133h1v1h-1z M936,137h1v1h-1z M945,134h1v3h-1z M944,133h1v1h-1z M944,137h1v1h-1z " fill="#0c0c78"/>
<path d="M159,132h1v1h-1z M159,138h1v1h-1z M167,132h1v1h-1z M167,138h1v1h-1z M175,132h1v1h-1z M175,138h1v1h-1z M183,132h1v1h-1z M183,138h1v1h-1z M191,132h1v1h-1z M191,138h1v1h-1z M199,132h1v1h-1z M199,138h1v1h-1z M207,132h1v1h-1z M207,138h1v1h-1z M215,132h1v1h-1z M215,138h1v1h-1z M223,132h1v1h-1z M223,138h1v1h-1z M231,132h1v1h-1z M231,138h1v1h-1z M239,132h1v1h-1z M239,138h1v1h-1z M247,132h1v1h-1z M247,138h1v1h-1z M255,132h1v1h-1z M255,138h1v1h-1z M263,132h1v1h-1z M263,138h1v1h-1z M271,132h1v1h-1z M271,138h1v1h-1z M279,132h1v1h-1z M279,138h1v1h-1z M287,132h1v1h-1z M287,138h1v1h-1z M295,132h1v1h-1z M295,138h1v1h-1z M303,132h1v1h-1z M303,138h1v1h-1z M311,132h1v1h-1z M311,138h1v1h-1z M319,132h1v1h-1z M319,138h1v1h-1z M327,132h1v1h-1z M327,138h1v1h-1z M335,132h1v1h-1z M335,138h1v1h-1z M343,132h1v1h-1z M343,138h1v1h-1z M351,132h1v1h-1z M351,138h1v1h-1z M359,132h1v1h-1z M359,138h1v1h-1z M367,132h1v1h-1z M367,138h1v1h-1z M375,132h1v1h-1z M375,138h1v1h-1z M383,132h1v1h-1z M383,138h1v1h-1z M391,132h1v1h-1z M391,138h1v1h-1z M399,132h1v1h-1z M399,138h1v1h-1z M407,132h1v1h-1z M407,138h1v1h-1z M415,132h1v1h-1z M415,138h1v1h-1z M423,132h1v1h-1z M423,138h1v1h-1z M431,132h1v1h-1z M431,138h1v1h-1z M439,132h1v1h-1z M439,138h1v1h-1z M447,132h1v1h-1z M447,138h1v1h-1z M455,132h1v1h-1z M455,138h1v1h-1z M463,132h1v1h-1z M463,138h1v1h-1z M471,132h1v1h-1z M471,138h1v1h-1z M479,132h1v1h-1z M479,138h1v1h-1z M487,132h1v1h-1z M487,138h1v1h-1z M495,132h1v1h-1z M495,138h1v1h-1z M503,132h1v1h-1z M503,138h1v1h-1z M511,132h1v1h-1z M511,138h1v1h-1z M519,132h1v1h-1z M519,138h1v1h-1z M527,132h1v1h-1z M527,138h1v1h-1z M535,132h1v1h-1z M535,138h1v1h-1z M543,132h1v1h-1z M543,138h1v1h-1z M551,132h1v1h-1z M551,138h1v1h-1z M559,132h1v1h-1z M559,138h1v1h-1z M567,132h1v1h-1z M567,138h1v1h-1z M575,132h1v1h-1z M575,138h1v1h-1z M583,132h1v1h-1z M583,138h1v1h-1z M591,132h1v1h-1z M591,138h1v1h-1z M599,132h1v1h-1z M599,138h1v1h-1z M607,132h1v1h-1z M607,138h1v1h-1z M615,132h1v1h-1z M615,138h1v1h-1z M623,132h1v1h-1z M623,138h1v1h-1z M631,132h1v1h-1z M631,138h1v1h-1z M639,132h1v1h-1z M639,138h1v1h-1z M647,132h1v1h-1z M647,138h1v1h-1z M655,132h1v1h-1z M655,138h1v1h-1z M663,132h1v1h-1z M663,138h1v1h-1z M671,132h1v1h-1z M671,138h1v1h-1z M679,132h1v1h-1z M679,138h1v1h-1z M687,132h1v1h-1z M687,138h1v1h-1z M695,132h1v1h-1z M695,138h1v1h-1z M703,132h1v1h-1z M703,138h1v1h-1z M711,132h1v1h-1z M711,138h1v1h-1z M719,132h1v1h-1z M719,138h1v1h-1z M727,132h1v1h-1z M727,138h1v1h-1z M735,132h1v1h-1z M735,138h1v1h-1z M743,132h1v1h-1z M743,138h1v1h-1z M751,132h1v1h-1z M751,138h1v1h-1z M759,132h1v1h-1z M759,138h1v1h-1z M767,132h1v1h-1z M767,138h1v1h-1z M775,132h1v1h-1z M775,138h1v1h-1z M783,132h1v1h-1z M783,138h1v1h-1z M791,132h1v1h-1z M791,138h1v1h-1z M799,132h1v1h-1z M799,138h1v1h-1z M807,132h1v1h-1z M807,138h1v1h-1z M815,132h1v1h-1z M815,138h1v1h-1z M823,132h1v1h-1z M823,138h1v1h-1z M831,132h1v1h-1z M831,138h1v1h-1z M839,132h1v1h-1z M839,138h1v1h-1z M847,132h1v1h-1z M847,138h1v1h-1z M855,132h1v1h-1z M855,138h1v1h-1z M863,132h1v1h-1z M863,138h1v1h-1z M871,132h1v1h-1z M871,138h1v1h-1z M879,132h1v1h-1z M879,138h1v1h-1z M887,132h1v1h-1z M887,138h1v1h-1z M895,132h1v1h-1z M895,138h1v1h-1z M903,132h1v1h-1z M903,138h1v1h-1z M911,132h1v1h-1z M911,138h1v1h-1z M919,132h1v1h-1z M919,138h1v1h-1z M927,132h1v1h-1z M927,138h1v1h-1z M935,132h1v1h-1z M935,138h1v1h-1z M943,132h1v1h-1z M943,138h1v1h-1z " fill="#0c0c78" fill-opacity="0.5"/>
<text x="491 499 505 508 515 521 530 536 542 548 554 563 566 570 576 588 596 604 611" y="156" font-size="11.0" fill="#000">RefSeqgenesfromNCBI</text>
<rect x="157" y="166" width="792" height="1" fill="#0c0c78"/>
<text x="445 452 458 464 466 468 474 480 483 485 491 497 503 509 516 522 528 534 540 546 552 558 567 569 578 585 591 593 599 605 608 610 613 615 624 631 635 638 640 646 648 654" y="187" font-size="11.0" fill="#000">Publications:SequencesinScientificArticles</text>
<text x="368 378 389 393 408 418 425 432 443 452 459 466 473 480 484 491 498 505 516 524 533 540 544 555 565 569 576 583 594 603 610 621 630 641 650 653 660 667 674 681 688 692 699 706 713 720 723 730" y="235" font-size="13.0" fill="#005a0a" clip-path="url(#cb235)">OMIMGenePhenotypes-DarkGreenCanBeDisease-causing</text>
<g clip-path="url(#ct235)">
<text x="368 378 389 393 408 418 425 432 443 452 459 466 473 480 484 491 498 505 516 524 533 540 544 555 565 569 576 583 594 603 610 621 630 641 650 653 660 667 674 681 688 692 699 706 713 720 723 730" y="234" font-size="13.0" fill="#005a0a">OMIMGenePhenotypes-DarkGreenCanBeDisease-causing</text>
</g>
<rect x="156" y="237" width="793" height="15" fill="#bebebe"/>
<path d="M653,257h1v8h-1z" fill="#000"/><path d="M654,257h1v8h-1z" fill="#000" fill-opacity="0.4"/><path d="M652,258h1v1h-1z" fill="#000" fill-opacity="0.8"/><path d="M651,259h1v1h-1z M652,259h1v1h-1z" fill="#000" fill-opacity="0.4"/>
<text x="436 443 449 455 459 465 474 480 486 492 495 497 506 513 519 523 525 531 537 540 549 552 556 562 574 580 586 593 601 611 615 621 623 629 635 641 656 662" y="265" font-size="11.0" fill="#000">ShortGeneticVariantsfromdbSNPrelease55</text>
<path d="M590,288h1v9h-1z" fill="#000" fill-opacity="0.85"/><path d="M591,288h1v9h-1z" fill="#000" fill-opacity="0.6"/><path d="M589,289h1v1h-1z" fill="#000" fill-opacity="0.85"/><path d="M589,290h1v1h-1z M588,290h1v1h-1z" fill="#000" fill-opacity="0.45"/>
<path d="M823,288h1v9h-1z" fill="#000" fill-opacity="0.85"/><path d="M824,288h1v9h-1z" fill="#000" fill-opacity="0.6"/><path d="M822,289h1v1h-1z" fill="#000" fill-opacity="0.85"/><path d="M822,290h1v1h-1z M821,290h1v1h-1z" fill="#000" fill-opacity="0.45"/>
<text x="384 391 594 601 608 615 675 683 690 697 764 771 806 813 827" y="297" font-size="13.0" fill="#000">547382,9488,209</text>
<text x="266 276 283 290 301 310 317 324 328 335 342 349 352 359 370 373 402 406 409 416 423 430 437 448 452 456 463 478 488 496 505 516 525 534 543 547 554 561 572 579 626 633 640 651 658 661 668 708 715 722 729 736 740 751 755 779 788 795 834" y="297" font-size="13.0" fill="#000" clip-path="url(#cb297)">GeneExpressionintissuesfromGTExRNA-seqofsamplesdonors(VAug)</text>
<g clip-path="url(#ct297)">
<text x="266 276 283 290 301 310 317 324 328 335 342 349 352 359 370 373 402 406 409 416 423 430 437 448 452 456 463 478 488 496 505 516 525 534 543 547 554 561 572 579 626 633 640 651 658 661 668 708 715 722 729 736 740 751 755 779 788 795 834" y="296" font-size="13.0" fill="#000">GeneExpressionintissuesfromGTExRNA-seqofsamplesdonors(VAug)</text>
</g>
<rect x="156" y="300" width="378" height="34" fill="#fff"/>
<rect x="156" y="300" width="378" height="1" fill="#f0f0f0"/>
<rect x="533" y="300" width="1" height="34" fill="#f0f0f0"/>
<rect x="156" y="333" width="378" height="1" fill="#f0f0f0"/>
<rect x="156" y="315" width="5" height="18" fill="#FFA54F"/>
<rect x="163" y="319" width="5" height="14" fill="#EE9A00"/>
<rect x="170" y="312" width="5" height="21" fill="#8FBC8F"/>
<rect x="177" y="318" width="5" height="15" fill="#8B1C62"/>
<rect x="184" y="319" width="5" height="14" fill="#EE6A50"/>
<rect x="191" y="317" width="5" height="16" fill="#FF0000"/>
<rect x="198" y="318" width="5" height="15" fill="#CDB79E"/>
<rect x="205" y="314" width="5" height="19" fill="#EEEE00"/>
<rect x="212" y="314" width="5" height="19" fill="#EEEE00"/>
<rect x="219" y="312" width="5" height="21" fill="#EEEE00"/>
<rect x="226" y="316" width="5" height="17" fill="#EEEE00"/>
<rect x="233" y="315" width="5" height="18" fill="#EEEE00"/>
<rect x="240" y="314" width="5" height="19" fill="#EEEE00"/>
<rect x="247" y="313" width="5" height="20" fill="#EEEE00"/>
<rect x="254" y="316" width="5" height="17" fill="#EEEE00"/>
<rect x="261" y="312" width="5" height="21" fill="#EEEE00"/>
<rect x="268" y="313" width="5" height="20" fill="#EEEE00"/>
<rect x="275" y="316" width="5" height="17" fill="#EEEE00"/>
<rect x="282" y="310" width="5" height="23" fill="#EEEE00"/>
<rect x="289" y="314" width="5" height="19" fill="#EEEE00"/>
<rect x="296" y="314" width="5" height="19" fill="#00CDCD"/>
<rect x="303" y="323" width="5" height="10" fill="#EE82EE"/>
<rect x="310" y="313" width="5" height="20" fill="#9AC0CD"/>
<rect x="317" y="314" width="5" height="19" fill="#EED5D2"/>
<rect x="324" y="314" width="5" height="19" fill="#EED5D2"/>
<rect x="331" y="319" width="5" height="14" fill="#CDB79E"/>
<rect x="338" y="322" width="5" height="11" fill="#EEC591"/>
<rect x="345" y="320" width="5" height="13" fill="#8B7355"/>
<rect x="352" y="322" width="5" height="11" fill="#8B7355"/>
<rect x="359" y="320" width="5" height="13" fill="#CDAA7D"/>
<rect x="366" y="312" width="5" height="21" fill="#EED5D2"/>
<rect x="373" y="325" width="5" height="8" fill="#B452CD"/>
<rect x="380" y="329" width="5" height="4" fill="#7A378B"/>
<rect x="387" y="318" width="5" height="15" fill="#CDB79E"/>
<rect x="394" y="317" width="5" height="16" fill="#CDB79E"/>
<rect x="401" y="328" width="5" height="5" fill="#CDB79E"/>
<rect x="408" y="317" width="5" height="16" fill="#9ACD32"/>
<rect x="415" y="316" width="5" height="17" fill="#CDB79E"/>
<rect x="422" y="328" width="5" height="5" fill="#7777FF"/>
<rect x="429" y="313" width="5" height="20" fill="#FFD700"/>
<rect x="436" y="314" width="5" height="19" fill="#FFB6C1"/>
<rect x="443" y="325" width="5" height="8" fill="#CD9B1D"/>
<rect x="450" y="311" width="5" height="22" fill="#B4EEB4"/>
<rect x="457" y="316" width="5" height="17" fill="#D9D9D9"/>
<rect x="464" y="311" width="5" height="22" fill="#3A5FCD"/>
<rect x="471" y="311" width="5" height="22" fill="#1E90FF"/>
<rect x="478" y="323" width="5" height="10" fill="#CDB79E"/>
<rect x="485" y="326" width="5" height="7" fill="#CDB79E"/>
<rect x="492" y="321" width="5" height="12" fill="#FFD39B"/>
<rect x="499" y="300" width="5" height="33" fill="#A6A6A6"/>
<rect x="506" y="308" width="5" height="25" fill="#008B45"/>
<rect x="513" y="314" width="5" height="19" fill="#EED5D2"/>
<rect x="520" y="316" width="5" height="17" fill="#EED5D2"/>
<rect x="527" y="332" width="5" height="1" fill="#FF00FF"/>
<rect x="156" y="334" width="793" height="2" fill="#000080"/>
<text x="290 306 313 672" y="351" font-size="13.0" fill="#000">3277</text>
<text x="281 297 320 329 340 351 358 362 373 377 387 391 395 402 413 421 428 435 442 453 462 469 476 484 493 500 504 507 514 525 534 541 548 555 558 565 569 576 580 591 600 603 610 621 628 635 639 646 654 661 683 690 697 700 707 710 713 720 727 738 742 746 753 768 777 786 795 805 814" y="351" font-size="13.0" fill="#000" clip-path="url(#cb351)">HKAcMark(OftenFoundNearActiveRegulatoryElements)oncelllinesfromENCODE</text>
<g clip-path="url(#ct351)">
<text x="281 297 320 329 340 351 358 362 373 377 387 391 395 402 413 421 428 435 442 453 462 469 476 484 493 500 504 507 514 525 534 541 548 555 558 565 569 576 580 591 600 603 610 621 628 635 639 646 654 661 683 690 697 700 707 710 713 720 727 738 742 746 753 768 777 786 795 805 814" y="350" font-size="13.0" fill="#000">HKAcMark(OftenFoundNearActiveRegulatoryElements)oncelllinesfromENCODE</text>
</g>
<rect x="156" y="382" width="793" height="1" fill="#782b3a"/>
<path d="M408,388h1v9h-1z" fill="#3c3c8c" fill-opacity="0.85"/><path d="M409,388h1v9h-1z" fill="#3c3c8c" fill-opacity="0.6"/><path d="M407,389h1v1h-1z" fill="#3c3c8c" fill-opacity="0.85"/><path d="M407,390h1v1h-1z M406,390h1v1h-1z" fill="#3c3c8c" fill-opacity="0.45"/>
<text x="412 419" y="397" font-size="13.0" fill="#3c3c8c">00</text>
<text x="430 437 444 448 452 459 466 470 477 481 488 499 508 515 522 529 538 541 548 559 568 575 582 589 596 600 607 614 618 621 628 639 646 657 666 673 680 683 690" y="397" font-size="13.0" fill="#3c3c8c" clip-path="url(#cb397)">vertebratesBasewiseConservationbyPhyloP</text>
<g clip-path="url(#ct397)">
<text x="430 437 444 448 452 459 466 470 477 481 488 499 508 515 522 529 538 541 548 559 568 575 582 589 596 600 607 614 618 621 628 639 646 657 666 673 680 683 690" y="396" font-size="13.0" fill="#3c3c8c">vertebratesBasewiseConservationbyPhyloP</text>
</g>
<rect x="165" y="425" width="37" height="1" fill="#90ff90" fill-opacity="0.45"/>
<rect x="181" y="425" width="6" height="3" fill="#00ff00"/>
<rect x="234" y="423" width="40" height="2" fill="url(#gC)"/>
<rect x="297" y="423" width="37" height="1" fill="#90ff90" fill-opacity="0.45"/>
<rect x="313" y="423" width="6" height="2" fill="#00ff00"/>
<rect x="366" y="423" width="40" height="2" fill="url(#gC)"/>
<rect x="431" y="423.7" width="10" height="1.5" fill="url(#gAL)"/>
<rect x="439" y="422.9" width="23" height="1.5" fill="url(#gAM)"/>
<rect x="460" y="423.7" width="11" height="1.5" fill="url(#gAR)"/>
<rect x="498" y="423" width="43" height="1.7" fill="url(#gG)"/>
<rect x="530" y="423.6" width="11" height="1.4" fill="url(#gGt)"/>
<rect x="564" y="423" width="43" height="1.7" fill="url(#gG)"/>
<rect x="596" y="423.6" width="11" height="1.4" fill="url(#gGt)"/>
<rect x="627" y="423" width="37" height="1" fill="#90ff90" fill-opacity="0.45"/>
<rect x="643" y="423" width="6" height="2" fill="#00ff00"/>
<rect x="696" y="425" width="43" height="1.7" fill="url(#gG)"/>
<rect x="728" y="425.6" width="11" height="1.4" fill="url(#gGt)"/>
<rect x="761" y="423.7" width="10" height="1.5" fill="url(#gAL)"/>
<rect x="769" y="422.9" width="23" height="1.5" fill="url(#gAM)"/>
<rect x="790" y="423.7" width="11" height="1.5" fill="url(#gAR)"/>
<rect x="825" y="423" width="37" height="1" fill="#90ff90" fill-opacity="0.45"/>
<rect x="841" y="423" width="6" height="2" fill="#00ff00"/>
<rect x="894" y="423" width="40" height="2" fill="url(#gC)"/>
<path d="M571,454h1v9h-1z" fill="#000a64" fill-opacity="0.85"/><path d="M572,454h1v9h-1z" fill="#000a64" fill-opacity="0.6"/><path d="M570,455h1v1h-1z" fill="#000a64" fill-opacity="0.85"/><path d="M570,456h1v1h-1z M569,456h1v1h-1z" fill="#000a64" fill-opacity="0.45"/>
<text x="575 582" y="463" font-size="13.0" fill="#000a64">00</text>
<text x="445 456 463 466 470 473 484 493 496 499 506 513 524 531 538 542 553 560 593 602 609 613 617 624 631 635 642 646 653" y="463" font-size="13.0" fill="#000a64" clip-path="url(#cb463)">MultizAlignmentsofVertebrates</text>
<g clip-path="url(#ct463)">
<text x="445 456 463 466 470 473 484 493 496 499 506 513 524 531 538 542 553 560 593 602 609 613 617 624 631 635 642 646 653" y="462" font-size="13.0" fill="#000a64">MultizAlignmentsofVertebrates</text>
</g>
<text x="183" y="492" font-size="13.0" fill="#000a64" clip-path="url(#cb492)">T</text>
<g clip-path="url(#ct492)">
<text x="183" y="491" font-size="13.0" fill="#000a64">T</text>
</g>
<text x="183" y="507" font-size="13.0" fill="#000a64" clip-path="url(#cb507)">T</text>
<g clip-path="url(#ct507)">
<text x="183" y="506" font-size="13.0" fill="#000a64">T</text>
</g>
<text x="183" y="523" font-size="13.0" fill="#8282b4" clip-path="url(#cb523)">=</text>
<g clip-path="url(#ct523)">
<text x="183" y="522" font-size="13.0" fill="#8282b4">=</text>
</g>
<text x="183" y="538" font-size="13.0" fill="#8282b4" clip-path="url(#cb538)">=</text>
<g clip-path="url(#ct538)">
<text x="183" y="537" font-size="13.0" fill="#8282b4">=</text>
</g>
<text x="183" y="553" font-size="13.0" fill="#8282b4" clip-path="url(#cb553)">=</text>
<g clip-path="url(#ct553)">
<text x="183" y="552" font-size="13.0" fill="#8282b4">=</text>
</g>
<text x="249" y="492" font-size="13.0" fill="#000a64" clip-path="url(#cb492)">C</text>
<g clip-path="url(#ct492)">
<text x="249" y="491" font-size="13.0" fill="#000a64">C</text>
</g>
<text x="249" y="507" font-size="13.0" fill="#000a64" clip-path="url(#cb507)">C</text>
<g clip-path="url(#ct507)">
<text x="249" y="506" font-size="13.0" fill="#000a64">C</text>
</g>
<text x="249" y="523" font-size="13.0" fill="#8282b4" clip-path="url(#cb523)">=</text>
<g clip-path="url(#ct523)">
<text x="249" y="522" font-size="13.0" fill="#8282b4">=</text>
</g>
<text x="249" y="538" font-size="13.0" fill="#8282b4" clip-path="url(#cb538)">=</text>
<g clip-path="url(#ct538)">
<text x="249" y="537" font-size="13.0" fill="#8282b4">=</text>
</g>
<text x="249" y="553" font-size="13.0" fill="#8282b4" clip-path="url(#cb553)">=</text>
<g clip-path="url(#ct553)">
<text x="249" y="552" font-size="13.0" fill="#8282b4">=</text>
</g>
<text x="315" y="492" font-size="13.0" fill="#000a64" clip-path="url(#cb492)">T</text>
<g clip-path="url(#ct492)">
<text x="315" y="491" font-size="13.0" fill="#000a64">T</text>
</g>
<text x="315" y="507" font-size="13.0" fill="#000a64" clip-path="url(#cb507)">T</text>
<g clip-path="url(#ct507)">
<text x="315" y="506" font-size="13.0" fill="#000a64">T</text>
</g>
<text x="315" y="523" font-size="13.0" fill="#8282b4" clip-path="url(#cb523)">=</text>
<g clip-path="url(#ct523)">
<text x="315" y="522" font-size="13.0" fill="#8282b4">=</text>
</g>
<text x="315" y="538" font-size="13.0" fill="#8282b4" clip-path="url(#cb538)">=</text>
<g clip-path="url(#ct538)">
<text x="315" y="537" font-size="13.0" fill="#8282b4">=</text>
</g>
<text x="315" y="553" font-size="13.0" fill="#8282b4" clip-path="url(#cb553)">=</text>
<g clip-path="url(#ct553)">
<text x="315" y="552" font-size="13.0" fill="#8282b4">=</text>
</g>
<text x="381" y="492" font-size="13.0" fill="#000a64" clip-path="url(#cb492)">C</text>
<g clip-path="url(#ct492)">
<text x="381" y="491" font-size="13.0" fill="#000a64">C</text>
</g>
<text x="381" y="507" font-size="13.0" fill="#000a64" clip-path="url(#cb507)">C</text>
<g clip-path="url(#ct507)">
<text x="381" y="506" font-size="13.0" fill="#000a64">C</text>
</g>
<text x="381" y="523" font-size="13.0" fill="#8282b4" clip-path="url(#cb523)">=</text>
<g clip-path="url(#ct523)">
<text x="381" y="522" font-size="13.0" fill="#8282b4">=</text>
</g>
<text x="381" y="538" font-size="13.0" fill="#8282b4" clip-path="url(#cb538)">=</text>
<g clip-path="url(#ct538)">
<text x="381" y="537" font-size="13.0" fill="#8282b4">=</text>
</g>
<text x="381" y="553" font-size="13.0" fill="#8282b4" clip-path="url(#cb553)">=</text>
<g clip-path="url(#ct553)">
<text x="381" y="552" font-size="13.0" fill="#8282b4">=</text>
</g>
<text x="447" y="492" font-size="13.0" fill="#000a64" clip-path="url(#cb492)">A</text>
<g clip-path="url(#ct492)">
<text x="447" y="491" font-size="13.0" fill="#000a64">A</text>
</g>
<text x="447" y="507" font-size="13.0" fill="#000a64" clip-path="url(#cb507)">A</text>
<g clip-path="url(#ct507)">
<text x="447" y="506" font-size="13.0" fill="#000a64">A</text>
</g>
<text x="447" y="523" font-size="13.0" fill="#8282b4" clip-path="url(#cb523)">=</text>
<g clip-path="url(#ct523)">
<text x="447" y="522" font-size="13.0" fill="#8282b4">=</text>
</g>
<text x="447" y="538" font-size="13.0" fill="#8282b4" clip-path="url(#cb538)">=</text>
<g clip-path="url(#ct538)">
<text x="447" y="537" font-size="13.0" fill="#8282b4">=</text>
</g>
<text x="447" y="553" font-size="13.0" fill="#8282b4" clip-path="url(#cb553)">=</text>
<g clip-path="url(#ct553)">
<text x="447" y="552" font-size="13.0" fill="#8282b4">=</text>
</g>
<text x="512" y="492" font-size="13.0" fill="#000a64" clip-path="url(#cb492)">G</text>
<g clip-path="url(#ct492)">
<text x="512" y="491" font-size="13.0" fill="#000a64">G</text>
</g>
<text x="512" y="507" font-size="13.0" fill="#000a64" clip-path="url(#cb507)">G</text>
<g clip-path="url(#ct507)">
<text x="512" y="506" font-size="13.0" fill="#000a64">G</text>
</g>
<text x="513" y="523" font-size="13.0" fill="#8282b4" clip-path="url(#cb523)">=</text>
<g clip-path="url(#ct523)">
<text x="513" y="522" font-size="13.0" fill="#8282b4">=</text>
</g>
<text x="513" y="538" font-size="13.0" fill="#8282b4" clip-path="url(#cb538)">=</text>
<g clip-path="url(#ct538)">
<text x="513" y="537" font-size="13.0" fill="#8282b4">=</text>
</g>
<text x="513" y="553" font-size="13.0" fill="#8282b4" clip-path="url(#cb553)">=</text>
<g clip-path="url(#ct553)">
<text x="513" y="552" font-size="13.0" fill="#8282b4">=</text>
</g>
<text x="578" y="492" font-size="13.0" fill="#000a64" clip-path="url(#cb492)">G</text>
<g clip-path="url(#ct492)">
<text x="578" y="491" font-size="13.0" fill="#000a64">G</text>
</g>
<text x="578" y="507" font-size="13.0" fill="#000a64" clip-path="url(#cb507)">G</text>
<g clip-path="url(#ct507)">
<text x="578" y="506" font-size="13.0" fill="#000a64">G</text>
</g>
<text x="579" y="523" font-size="13.0" fill="#8282b4" clip-path="url(#cb523)">=</text>
<g clip-path="url(#ct523)">
<text x="579" y="522" font-size="13.0" fill="#8282b4">=</text>
</g>
<text x="579" y="538" font-size="13.0" fill="#8282b4" clip-path="url(#cb538)">=</text>
<g clip-path="url(#ct538)">
<text x="579" y="537" font-size="13.0" fill="#8282b4">=</text>
</g>
<text x="579" y="553" font-size="13.0" fill="#8282b4" clip-path="url(#cb553)">=</text>
<g clip-path="url(#ct553)">
<text x="579" y="552" font-size="13.0" fill="#8282b4">=</text>
</g>
<text x="645" y="492" font-size="13.0" fill="#000a64" clip-path="url(#cb492)">T</text>
<g clip-path="url(#ct492)">
<text x="645" y="491" font-size="13.0" fill="#000a64">T</text>
</g>
<text x="645" y="507" font-size="13.0" fill="#000a64" clip-path="url(#cb507)">T</text>
<g clip-path="url(#ct507)">
<text x="645" y="506" font-size="13.0" fill="#000a64">T</text>
</g>
<text x="645" y="523" font-size="13.0" fill="#8282b4" clip-path="url(#cb523)">=</text>
<g clip-path="url(#ct523)">
<text x="645" y="522" font-size="13.0" fill="#8282b4">=</text>
</g>
<text x="645" y="538" font-size="13.0" fill="#8282b4" clip-path="url(#cb538)">=</text>
<g clip-path="url(#ct538)">
<text x="645" y="537" font-size="13.0" fill="#8282b4">=</text>
</g>
<text x="645" y="553" font-size="13.0" fill="#8282b4" clip-path="url(#cb553)">=</text>
<g clip-path="url(#ct553)">
<text x="645" y="552" font-size="13.0" fill="#8282b4">=</text>
</g>
<text x="710" y="492" font-size="13.0" fill="#000a64" clip-path="url(#cb492)">G</text>
<g clip-path="url(#ct492)">
<text x="710" y="491" font-size="13.0" fill="#000a64">G</text>
</g>
<text x="710" y="507" font-size="13.0" fill="#000a64" clip-path="url(#cb507)">G</text>
<g clip-path="url(#ct507)">
<text x="710" y="506" font-size="13.0" fill="#000a64">G</text>
</g>
<text x="711" y="523" font-size="13.0" fill="#8282b4" clip-path="url(#cb523)">=</text>
<g clip-path="url(#ct523)">
<text x="711" y="522" font-size="13.0" fill="#8282b4">=</text>
</g>
<text x="711" y="538" font-size="13.0" fill="#8282b4" clip-path="url(#cb538)">=</text>
<g clip-path="url(#ct538)">
<text x="711" y="537" font-size="13.0" fill="#8282b4">=</text>
</g>
<text x="711" y="553" font-size="13.0" fill="#8282b4" clip-path="url(#cb553)">=</text>
<g clip-path="url(#ct553)">
<text x="711" y="552" font-size="13.0" fill="#8282b4">=</text>
</g>
<text x="777" y="492" font-size="13.0" fill="#000a64" clip-path="url(#cb492)">A</text>
<g clip-path="url(#ct492)">
<text x="777" y="491" font-size="13.0" fill="#000a64">A</text>
</g>
<text x="777" y="507" font-size="13.0" fill="#000a64" clip-path="url(#cb507)">A</text>
<g clip-path="url(#ct507)">
<text x="777" y="506" font-size="13.0" fill="#000a64">A</text>
</g>
<text x="777" y="523" font-size="13.0" fill="#8282b4" clip-path="url(#cb523)">=</text>
<g clip-path="url(#ct523)">
<text x="777" y="522" font-size="13.0" fill="#8282b4">=</text>
</g>
<text x="777" y="538" font-size="13.0" fill="#8282b4" clip-path="url(#cb538)">=</text>
<g clip-path="url(#ct538)">
<text x="777" y="537" font-size="13.0" fill="#8282b4">=</text>
</g>
<text x="777" y="553" font-size="13.0" fill="#8282b4" clip-path="url(#cb553)">=</text>
<g clip-path="url(#ct553)">
<text x="777" y="552" font-size="13.0" fill="#8282b4">=</text>
</g>
<text x="843" y="492" font-size="13.0" fill="#000a64" clip-path="url(#cb492)">T</text>
<g clip-path="url(#ct492)">
<text x="843" y="491" font-size="13.0" fill="#000a64">T</text>
</g>
<text x="843" y="507" font-size="13.0" fill="#000a64" clip-path="url(#cb507)">T</text>
<g clip-path="url(#ct507)">
<text x="843" y="506" font-size="13.0" fill="#000a64">T</text>
</g>
<text x="843" y="523" font-size="13.0" fill="#8282b4" clip-path="url(#cb523)">=</text>
<g clip-path="url(#ct523)">
<text x="843" y="522" font-size="13.0" fill="#8282b4">=</text>
</g>
<text x="843" y="538" font-size="13.0" fill="#8282b4" clip-path="url(#cb538)">=</text>
<g clip-path="url(#ct538)">
<text x="843" y="537" font-size="13.0" fill="#8282b4">=</text>
</g>
<text x="843" y="553" font-size="13.0" fill="#8282b4" clip-path="url(#cb553)">=</text>
<g clip-path="url(#ct553)">
<text x="843" y="552" font-size="13.0" fill="#8282b4">=</text>
</g>
<text x="909" y="492" font-size="13.0" fill="#000a64" clip-path="url(#cb492)">C</text>
<g clip-path="url(#ct492)">
<text x="909" y="491" font-size="13.0" fill="#000a64">C</text>
</g>
<text x="909" y="507" font-size="13.0" fill="#000a64" clip-path="url(#cb507)">C</text>
<g clip-path="url(#ct507)">
<text x="909" y="506" font-size="13.0" fill="#000a64">C</text>
</g>
<text x="910" y="523" font-size="13.0" fill="#8282b4" clip-path="url(#cb523)">=</text>
<g clip-path="url(#ct523)">
<text x="910" y="522" font-size="13.0" fill="#8282b4">=</text>
</g>
<text x="910" y="538" font-size="13.0" fill="#8282b4" clip-path="url(#cb538)">=</text>
<g clip-path="url(#ct538)">
<text x="910" y="537" font-size="13.0" fill="#8282b4">=</text>
</g>
<text x="910" y="553" font-size="13.0" fill="#8282b4" clip-path="url(#cb553)">=</text>
<g clip-path="url(#ct553)">
<text x="910" y="552" font-size="13.0" fill="#8282b4">=</text>
</g>
<text x="441 450 457 464 471 478 482 485 492 503 512 515 522 533 540 547 551 562 569 580 589 596 603 610 617 621 632 639 646 653 660" y="613" font-size="13.0" fill="#000" clip-path="url(#cb613)">RepeatingElementsbyRepeatMasker</text>
<g clip-path="url(#ct613)">
<text x="441 450 457 464 471 478 482 485 492 503 512 515 522 533 540 547 551 562 569 580 589 596 603 610 617 621 632 639 646 653 660" y="612" font-size="13.0" fill="#000">RepeatingElementsbyRepeatMasker</text>
</g>
<rect x="156" y="615" width="793" height="15" fill="#000"/>
</svg>
</body></html>
